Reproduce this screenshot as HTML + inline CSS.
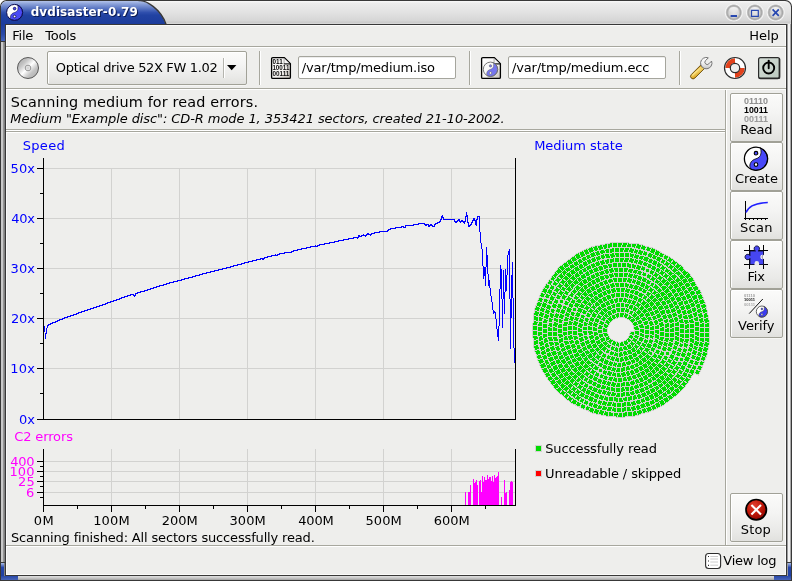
<!DOCTYPE html>
<html lang="en">
<head>
<meta charset="utf-8">
<title>dvdisaster-0.79</title>
<style>
html,body{margin:0;padding:0;background:#fff;}
body{width:792px;height:581px;overflow:hidden;position:relative;font-family:"DejaVu Sans","Liberation Sans",sans-serif;}
#win{position:absolute;left:0;top:0;width:792px;height:581px;overflow:hidden;will-change:transform;}
.t{position:absolute;white-space:pre;line-height:normal;color:#000;font-family:"DejaVu Sans","Liberation Sans",sans-serif;}
.abs{position:absolute;}
svg{position:absolute;left:0;top:0;overflow:visible;}
.hsep{position:absolute;height:1px;background:#a7a79e;box-shadow:0 1px 0 #fff;}
.vsep{position:absolute;width:1px;background:#a7a79e;box-shadow:1px 0 0 #fff;}
.btn{position:absolute;box-sizing:border-box;border:1px solid #a1a197;border-radius:2px;background:linear-gradient(#fbfbfa,#f4f4f3 40%,#e9e9e7 80%,#e1e1de);box-shadow:inset 1px 1px 0 #fff,0 1px 0 rgba(255,255,255,.45);}
.entry{position:absolute;box-sizing:border-box;border:1px solid #a5a59d;border-radius:2px;background:#fff;box-shadow:inset 0 1px 0 rgba(0,0,0,.07);}

</style>
</head>
<body>
<div id="win">
<svg id="frame" width="792" height="581" viewBox="0 0 792 581">
<defs>
<linearGradient id="gTitle" gradientUnits="userSpaceOnUse" x1="0" y1="1" x2="0" y2="24"><stop offset="0" stop-color="#f8f8f8"/><stop offset="0.045" stop-color="#f4f4f4"/><stop offset="0.09" stop-color="#ececec"/><stop offset="0.5" stop-color="#e2e2e2"/><stop offset="0.85" stop-color="#d6d6d6"/><stop offset="0.93" stop-color="#cbcbcb"/><stop offset="1" stop-color="#dcdcdc"/></linearGradient>
<linearGradient id="gTab" x1="0" y1="0" x2="0" y2="1"><stop offset="0" stop-color="#b4c4ea"/><stop offset="0.12" stop-color="#8da3da"/><stop offset="0.5" stop-color="#2f4fad"/><stop offset="0.62" stop-color="#2142a2"/><stop offset="1" stop-color="#1c3c9c"/></linearGradient>
<linearGradient id="gSideL" x1="0" y1="0" x2="1" y2="0"><stop offset="0" stop-color="#d8d8d8"/><stop offset="0.4" stop-color="#c4c4c4"/><stop offset="1" stop-color="#8c8c8c"/></linearGradient>
<linearGradient id="gSideR" x1="0" y1="0" x2="1" y2="0"><stop offset="0" stop-color="#8c8c8c"/><stop offset="0.4" stop-color="#f0f0f0"/><stop offset="1" stop-color="#c8c8c8"/></linearGradient>
<linearGradient id="gBot" x1="0" y1="0" x2="0" y2="1"><stop offset="0" stop-color="#e0e0e0"/><stop offset="0.5" stop-color="#c8c8c8"/><stop offset="1" stop-color="#a0a0a0"/></linearGradient>
<linearGradient id="gBlueV" x1="0" y1="0" x2="0" y2="1"><stop offset="0" stop-color="#1c3c9c"/><stop offset="0.6" stop-color="#2a4aa8"/><stop offset="1" stop-color="#4464bc"/></linearGradient>
<linearGradient id="gBlueC" x1="0" y1="0" x2="0" y2="1"><stop offset="0" stop-color="#a8bce8"/><stop offset="0.35" stop-color="#2444a8"/><stop offset="1" stop-color="#2040a0"/></linearGradient>
<linearGradient id="gBlueB" x1="0" y1="0" x2="0" y2="1"><stop offset="0" stop-color="#2848a8"/><stop offset="1" stop-color="#4864b8"/></linearGradient>
<radialGradient id="gBtn" cx="0.5" cy="0.5" r="0.5"><stop offset="0" stop-color="#e4e4e4"/><stop offset="0.5" stop-color="#d6d6d6"/><stop offset="0.64" stop-color="#b4b4b4"/><stop offset="0.72" stop-color="#a6a6a6"/><stop offset="0.8" stop-color="#c8c8c8"/><stop offset="0.88" stop-color="#f6f6f6"/><stop offset="1" stop-color="#f0f0f0" stop-opacity="0"/></radialGradient><linearGradient id="gBtnHi" x1="0" y1="0" x2="0" y2="1"><stop offset="0" stop-color="#fff" stop-opacity="0.75"/><stop offset="1" stop-color="#fff" stop-opacity="0"/></linearGradient>
<clipPath id="winclip"><path d="M0 581V6.5A6.5 6.5 0 0 1 6.5 0H785.5A6.5 6.5 0 0 1 792 6.5V581Z"/></clipPath>
</defs>
<g clip-path="url(#winclip)">
<rect x="0" y="0" width="792" height="581" fill="#383838"/>
<path d="M1 24V7A6 6 0 0 1 7 1H785A6 6 0 0 1 791 7V24Z" fill="url(#gTitle)"/>
<path d="M1 24h2v552h-2z" fill="#c9c9c9"/><path d="M3 24h1v552h-1z" fill="#949494"/><path d="M4 24h1v552h-1z" fill="#808080"/>
<path d="M787 24h1v552h-1z" fill="#9c9c9c"/><path d="M788 24h2v552h-2z" fill="#f2f2f2"/><path d="M790 24h1v552h-1z" fill="#a8a8a8"/>
<rect x="1" y="576" width="790" height="4" fill="url(#gBot)"/>
<path d="M1 24V7A6 6 0 0 1 7 1H140.5C146 1 160.3 8.8 165.7 24Z" fill="url(#gTab)"/>
<path d="M138.5 0.6H140.5C146.2 0.8 160.7 8.6 166.1 24.4" fill="none" stroke="#383838" stroke-width="1.4"/>
<rect x="1" y="24" width="4" height="17" fill="url(#gBlueV)"/>
<rect x="0" y="41" width="5" height="1" fill="#383838"/>
<rect x="0" y="562" width="5" height="1" fill="#383838"/>
<rect x="1" y="563" width="3" height="13" fill="url(#gBlueC)"/>
<rect x="1" y="576" width="17" height="4" fill="url(#gBlueB)"/>
<rect x="787" y="562" width="5" height="1" fill="#383838"/>
<rect x="788" y="563" width="3" height="13" fill="url(#gBlueC)"/>
<rect x="774" y="576" width="17" height="4" fill="url(#gBlueB)"/>
<rect x="5.5" y="24.5" width="781" height="551" fill="none" stroke="#383838" stroke-width="1"/>
<rect x="6" y="25" width="780" height="550" fill="#fbfbfa"/>
<rect x="7" y="26" width="778" height="548" fill="#eeeeec"/>
<circle cx="733.8" cy="12.5" r="9.6" fill="url(#gBtn)"/>
<ellipse cx="733.8" cy="9.9" rx="4.6" ry="3" fill="url(#gBtnHi)"/>
<rect x="730.5999999999999" y="15" width="6.4" height="2" fill="#2848b0"/>
<circle cx="754.9" cy="12.5" r="9.6" fill="url(#gBtn)"/>
<ellipse cx="754.9" cy="9.9" rx="4.6" ry="3" fill="url(#gBtnHi)"/>
<path d="M751.5 10.3H758.3V16.3H751.5Z" fill="none" stroke="#2848b0" stroke-width="1.2"/>
<circle cx="775.7" cy="12.5" r="9.6" fill="url(#gBtn)"/>
<ellipse cx="775.7" cy="9.9" rx="4.6" ry="3" fill="url(#gBtnHi)"/>
<path d="M772.6 9.4L778.8000000000001 15.8M778.8000000000001 9.4L772.6 15.8" fill="none" stroke="#2848b0" stroke-width="1.7"/>
</g>
</svg>
<div class="hsep" style="left:6px;top:46px;width:780px"></div>
<div class="hsep" style="left:6px;top:88px;width:780px"></div>
<div class="hsep" style="left:6px;top:129px;width:719px"></div>
<div class="hsep" style="left:6px;top:131px;width:719px"></div>
<div class="vsep" style="left:725px;top:90px;height:455px"></div>
<div class="hsep" style="left:6px;top:545px;width:780px"></div>
<div class="btn" id="drive" style="left:47px;top:51px;width:200px;height:34px"></div>
<div class="vsep" style="left:223px;top:58px;height:20px;background:#b4b4ae"></div>
<svg width="792" height="581" viewBox="0 0 792 581"><path d="M227 65H236.4L231.7 70.2Z" fill="#000"/></svg>
<div class="vsep" style="left:259px;top:51px;height:34px"></div>
<div class="entry" style="left:298px;top:56px;width:158px;height:23px"></div>
<div class="vsep" style="left:469px;top:51px;height:34px"></div>
<div class="entry" style="left:508px;top:56px;width:158px;height:23px"></div>
<div class="vsep" style="left:679px;top:51px;height:34px"></div>
<div class="btn" style="left:730px;top:93px;width:53px;height:49px"></div>
<div class="btn" style="left:730px;top:142px;width:53px;height:49px"></div>
<div class="btn" style="left:730px;top:191px;width:53px;height:49px"></div>
<div class="btn" style="left:730px;top:240px;width:53px;height:49px"></div>
<div class="btn" style="left:730px;top:289px;width:53px;height:49px"></div>
<div class="btn" style="left:730px;top:493px;width:53px;height:49px"></div>
<svg id="chart" width="792" height="581" viewBox="0 0 792 581" shape-rendering="crispEdges">
<path d="M44 168h471v1h-471zM44 218h471v1h-471zM44 268h471v1h-471zM44 318h471v1h-471zM44 368h471v1h-471zM111 168h1v251h-1zM179 168h1v251h-1zM247 168h1v251h-1zM315 168h1v251h-1zM383 168h1v251h-1zM451 168h1v251h-1z" fill="#d2d2d0"/>
<path d="M44 461h471v1h-471zM44 471h471v1h-471zM44 481h471v1h-471zM44 492h471v1h-471zM111 449h1v56h-1zM179 449h1v56h-1zM247 449h1v56h-1zM315 449h1v56h-1zM383 449h1v56h-1zM451 449h1v56h-1z" fill="#d2d2d0"/>
<path d="M43 158h1v262h-1zM43 419h473v1h-473zM515 158h1v262h-1zM37 168h6v1h-6zM37 218h6v1h-6zM37 268h6v1h-6zM37 318h6v1h-6zM37 368h6v1h-6zM37 419h6v1h-6zM40 193h3v1h-3zM40 243h3v1h-3zM40 293h3v1h-3zM40 343h3v1h-3zM40 393h3v1h-3zM43 449h1v63h-1zM43 505h473v1h-473zM515 449h1v57h-1zM37 461h6v1h-6zM37 471h6v1h-6zM37 481h6v1h-6zM37 492h6v1h-6zM40 466h3v1h-3zM40 476h3v1h-3zM40 486h3v1h-3zM40 497h3v1h-3zM111 506h1v6h-1zM179 506h1v6h-1zM247 506h1v6h-1zM315 506h1v6h-1zM383 506h1v6h-1zM451 506h1v6h-1zM77 506h1v3h-1zM145 506h1v3h-1zM213 506h1v3h-1zM281 506h1v3h-1zM349 506h1v3h-1zM417 506h1v3h-1zM485 506h1v3h-1z" fill="#000"/>
<path d="M44 326h1v6h-1zM45 333h1v6h-1zM46 328h1v6h-1zM47 325h1v3h-1zM48 324h1v2h-1zM49 324h1v1h-1zM50 323h1v2h-1zM51 323h1v1h-1zM52 322h1v2h-1zM53 322h1v1h-1zM54 322h1v1h-1zM55 321h1v2h-1zM56 321h1v1h-1zM57 320h1v2h-1zM58 320h1v1h-1zM59 319h1v2h-1zM60 319h1v1h-1zM61 319h1v1h-1zM62 318h1v2h-1zM63 318h1v1h-1zM64 317h1v2h-1zM65 317h1v1h-1zM66 317h1v1h-1zM67 316h1v2h-1zM68 316h1v1h-1zM69 316h1v1h-1zM70 315h1v2h-1zM71 315h1v1h-1zM72 315h1v1h-1zM73 314h1v2h-1zM74 314h1v1h-1zM75 314h1v1h-1zM76 313h1v2h-1zM77 313h1v1h-1zM78 312h1v2h-1zM79 312h1v1h-1zM80 312h1v1h-1zM81 311h1v2h-1zM82 311h1v1h-1zM83 311h1v1h-1zM84 310h1v2h-1zM85 310h1v1h-1zM86 310h1v1h-1zM87 309h1v2h-1zM88 309h1v1h-1zM89 309h1v1h-1zM90 308h1v2h-1zM91 308h1v1h-1zM92 308h1v1h-1zM93 307h1v2h-1zM94 307h1v1h-1zM95 307h1v1h-1zM96 306h1v2h-1zM97 306h1v1h-1zM98 306h1v1h-1zM99 305h1v2h-1zM100 305h1v1h-1zM101 305h1v1h-1zM102 304h1v2h-1zM103 304h1v1h-1zM104 304h1v1h-1zM105 303h1v2h-1zM106 303h1v1h-1zM107 302h1v2h-1zM108 302h1v1h-1zM109 302h1v1h-1zM110 301h1v2h-1zM111 301h1v1h-1zM112 301h1v1h-1zM113 300h1v2h-1zM114 300h1v1h-1zM115 300h1v1h-1zM116 299h1v2h-1zM117 299h1v1h-1zM118 299h1v1h-1zM119 298h1v2h-1zM120 298h1v1h-1zM121 297h1v2h-1zM122 297h1v1h-1zM123 297h1v1h-1zM124 296h1v2h-1zM125 296h1v1h-1zM126 296h1v1h-1zM127 295h1v2h-1zM128 295h1v1h-1zM129 295h1v1h-1zM130 294h1v2h-1zM131 294h1v1h-1zM132 294h1v1h-1zM133 294h1v2h-1zM134 295h1v2h-1zM135 293h1v3h-1zM136 293h1v1h-1zM137 292h1v2h-1zM138 292h1v1h-1zM139 292h1v1h-1zM140 291h1v2h-1zM141 291h1v1h-1zM142 291h1v1h-1zM143 291h1v1h-1zM144 290h1v2h-1zM145 290h1v1h-1zM146 290h1v1h-1zM147 289h1v2h-1zM148 289h1v1h-1zM149 289h1v1h-1zM150 288h1v2h-1zM151 288h1v1h-1zM152 288h1v1h-1zM153 287h1v2h-1zM154 287h1v1h-1zM155 287h1v1h-1zM156 286h1v2h-1zM157 286h1v1h-1zM158 286h1v1h-1zM159 285h1v2h-1zM160 285h1v1h-1zM161 285h1v1h-1zM162 285h1v1h-1zM163 284h1v2h-1zM164 284h1v1h-1zM165 284h1v1h-1zM166 283h1v2h-1zM167 283h1v1h-1zM168 283h1v1h-1zM169 282h1v2h-1zM170 282h1v1h-1zM171 282h1v1h-1zM172 282h1v1h-1zM173 281h1v2h-1zM174 281h1v1h-1zM175 281h1v1h-1zM176 281h1v1h-1zM177 280h1v2h-1zM178 280h1v1h-1zM179 280h1v1h-1zM180 280h1v1h-1zM181 279h1v2h-1zM182 279h1v1h-1zM183 279h1v1h-1zM184 278h1v2h-1zM185 278h1v1h-1zM186 278h1v1h-1zM187 278h1v1h-1zM188 277h1v2h-1zM189 277h1v1h-1zM190 277h1v1h-1zM191 277h1v1h-1zM192 276h1v2h-1zM193 276h1v1h-1zM194 276h1v1h-1zM195 275h1v2h-1zM196 275h1v1h-1zM197 275h1v1h-1zM198 275h1v1h-1zM199 274h1v2h-1zM200 274h1v1h-1zM201 274h1v1h-1zM202 273h1v2h-1zM203 273h1v1h-1zM204 273h1v1h-1zM205 273h1v1h-1zM206 272h1v2h-1zM207 272h1v1h-1zM208 272h1v1h-1zM209 272h1v1h-1zM210 271h1v2h-1zM211 271h1v1h-1zM212 271h1v1h-1zM213 271h1v1h-1zM214 270h1v2h-1zM215 270h1v1h-1zM216 270h1v1h-1zM217 270h1v1h-1zM218 269h1v2h-1zM219 269h1v1h-1zM220 269h1v1h-1zM221 269h1v1h-1zM222 268h1v2h-1zM223 268h1v1h-1zM224 268h1v1h-1zM225 268h1v1h-1zM226 267h1v2h-1zM227 267h1v1h-1zM228 267h1v1h-1zM229 267h1v1h-1zM230 266h1v2h-1zM231 266h1v1h-1zM232 266h1v1h-1zM233 265h1v2h-1zM234 265h1v1h-1zM235 265h1v1h-1zM236 265h1v1h-1zM237 264h1v2h-1zM238 264h1v1h-1zM239 264h1v1h-1zM240 264h1v1h-1zM241 263h1v2h-1zM242 263h1v1h-1zM243 263h1v1h-1zM244 262h1v2h-1zM245 262h1v1h-1zM246 262h1v1h-1zM247 262h1v1h-1zM248 261h1v2h-1zM249 261h1v1h-1zM250 261h1v1h-1zM251 261h1v1h-1zM252 260h1v2h-1zM253 260h1v1h-1zM254 260h1v1h-1zM255 260h1v1h-1zM256 259h1v2h-1zM257 259h1v1h-1zM258 259h1v1h-1zM259 259h1v1h-1zM260 258h1v2h-1zM261 258h1v1h-1zM262 258h1v2h-1zM263 258h1v2h-1zM264 257h1v2h-1zM265 257h1v1h-1zM266 257h1v1h-1zM267 256h1v2h-1zM268 256h1v1h-1zM269 256h1v1h-1zM270 256h1v1h-1zM271 255h1v2h-1zM272 255h1v1h-1zM273 255h1v1h-1zM274 255h1v1h-1zM275 254h1v2h-1zM276 255h1v1h-1zM277 254h1v2h-1zM278 254h1v1h-1zM279 253h1v2h-1zM280 253h1v1h-1zM281 253h1v1h-1zM282 253h1v1h-1zM283 253h1v1h-1zM284 252h1v2h-1zM285 252h1v1h-1zM286 252h1v1h-1zM287 252h1v1h-1zM288 252h1v1h-1zM289 252h1v1h-1zM290 252h1v1h-1zM291 251h1v2h-1zM292 251h1v1h-1zM293 250h1v2h-1zM294 250h1v1h-1zM295 250h1v1h-1zM296 250h1v1h-1zM297 249h1v2h-1zM298 249h1v1h-1zM299 249h1v1h-1zM300 249h1v1h-1zM301 248h1v2h-1zM302 248h1v1h-1zM303 248h1v1h-1zM304 248h1v1h-1zM305 248h1v1h-1zM306 247h1v2h-1zM307 247h1v1h-1zM308 247h1v1h-1zM309 247h1v1h-1zM310 246h1v2h-1zM311 246h1v1h-1zM312 246h1v1h-1zM313 246h1v1h-1zM314 246h1v1h-1zM315 245h1v2h-1zM316 246h1v1h-1zM317 245h1v2h-1zM318 245h1v1h-1zM319 244h1v2h-1zM320 244h1v1h-1zM321 244h1v1h-1zM322 244h1v1h-1zM323 244h1v1h-1zM324 243h1v2h-1zM325 243h1v1h-1zM326 243h1v1h-1zM327 243h1v1h-1zM328 243h1v1h-1zM329 242h1v2h-1zM330 242h1v1h-1zM331 242h1v1h-1zM332 242h1v1h-1zM333 242h1v1h-1zM334 241h1v2h-1zM335 241h1v1h-1zM336 241h1v1h-1zM337 241h1v1h-1zM338 240h1v2h-1zM339 240h1v1h-1zM340 240h1v1h-1zM341 240h1v1h-1zM342 240h1v1h-1zM343 239h1v2h-1zM344 239h1v1h-1zM345 239h1v1h-1zM346 239h1v1h-1zM347 239h1v1h-1zM348 238h1v2h-1zM349 238h1v1h-1zM350 238h1v1h-1zM351 238h1v1h-1zM352 238h1v1h-1zM353 237h1v2h-1zM354 237h1v1h-1zM355 237h1v1h-1zM356 237h1v1h-1zM357 237h1v2h-1zM358 235h1v3h-1zM359 235h1v2h-1zM360 236h1v1h-1zM361 235h1v2h-1zM362 235h1v1h-1zM363 234h1v2h-1zM364 235h1v1h-1zM365 235h1v2h-1zM366 234h1v2h-1zM367 233h1v2h-1zM368 233h1v2h-1zM369 234h1v1h-1zM370 234h1v2h-1zM371 233h1v2h-1zM372 233h1v1h-1zM373 233h1v1h-1zM374 232h1v2h-1zM375 232h1v1h-1zM376 232h1v1h-1zM377 232h1v1h-1zM378 232h1v1h-1zM379 231h1v2h-1zM380 231h1v1h-1zM381 231h1v1h-1zM382 231h1v1h-1zM383 231h1v1h-1zM384 231h1v1h-1zM385 231h1v1h-1zM386 231h1v1h-1zM387 230h1v2h-1zM388 229h1v2h-1zM389 229h1v1h-1zM390 228h1v2h-1zM391 228h1v1h-1zM392 228h1v1h-1zM393 228h1v1h-1zM394 228h1v1h-1zM395 227h1v2h-1zM396 227h1v1h-1zM397 227h1v1h-1zM398 227h1v1h-1zM399 227h1v1h-1zM400 227h1v1h-1zM401 226h1v2h-1zM402 226h1v1h-1zM403 226h1v2h-1zM404 227h1v1h-1zM405 225h1v3h-1zM406 225h1v1h-1zM407 225h1v1h-1zM408 225h1v1h-1zM409 225h1v1h-1zM410 225h1v1h-1zM411 225h1v1h-1zM412 225h1v1h-1zM413 224h1v2h-1zM414 224h1v1h-1zM415 224h1v1h-1zM416 224h1v1h-1zM417 224h1v1h-1zM418 223h1v2h-1zM419 223h1v1h-1zM420 223h1v1h-1zM421 223h1v1h-1zM422 223h1v1h-1zM423 223h1v1h-1zM424 223h1v2h-1zM425 224h1v2h-1zM426 224h1v2h-1zM427 224h1v1h-1zM428 224h1v3h-1zM429 225h1v2h-1zM430 224h1v2h-1zM431 224h1v2h-1zM432 225h1v2h-1zM433 226h1v1h-1zM434 224h1v3h-1zM435 223h1v2h-1zM436 223h1v1h-1zM437 222h1v2h-1zM438 222h1v1h-1zM439 221h1v2h-1zM440 219h1v3h-1zM441 216h1v4h-1zM442 215h1v3h-1zM443 217h1v3h-1zM444 219h1v1h-1zM445 219h1v1h-1zM446 219h1v1h-1zM447 219h1v1h-1zM448 219h1v1h-1zM449 219h1v1h-1zM450 219h1v1h-1zM451 219h1v1h-1zM452 219h1v1h-1zM453 219h1v1h-1zM454 219h1v3h-1zM455 221h1v2h-1zM456 221h1v2h-1zM457 220h1v2h-1zM458 219h1v2h-1zM459 219h1v3h-1zM460 221h1v2h-1zM461 220h1v2h-1zM462 220h1v2h-1zM463 221h1v2h-1zM464 221h1v3h-1zM465 216h1v6h-1zM466 212h1v5h-1zM467 215h1v8h-1zM468 222h1v5h-1zM469 225h1v2h-1zM470 224h1v2h-1zM471 222h1v3h-1zM472 220h1v3h-1zM473 218h1v3h-1zM474 218h1v3h-1zM475 220h1v5h-1zM476 219h1v7h-1zM477 216h1v4h-1zM478 216h1v1h-1zM479 216h1v16h-1zM480 232h1v11h-1zM481 243h1v6h-1zM482 249h1v17h-1zM483 266h1v13h-1zM484 267h1v9h-1zM485 267h1v19h-1zM486 247h1v20h-1zM487 255h1v19h-1zM488 274h1v12h-1zM489 280h1v8h-1zM490 288h1v8h-1zM491 296h1v6h-1zM492 302h1v8h-1zM493 310h1v4h-1zM494 311h1v2h-1zM495 312h1v7h-1zM496 319h1v10h-1zM497 329h1v8h-1zM498 326h1v15h-1zM499 289h1v37h-1zM500 265h1v24h-1zM501 269h1v30h-1zM502 299h1v29h-1zM503 270h1v29h-1zM504 292h1v22h-1zM505 269h1v23h-1zM506 275h1v16h-1zM507 255h1v20h-1zM508 251h1v4h-1zM509 249h1v50h-1zM510 299h1v50h-1zM511 275h1v43h-1zM512 262h1v36h-1zM513 298h1v50h-1zM514 348h1v15h-1z" fill="#0000ff"/>
<path d="M465 492h1v13h-1zM468 492h1v13h-1zM469 492h1v13h-1zM470 485h1v20h-1zM473 479h1v26h-1zM474 483h1v22h-1zM475 482h1v23h-1zM476 480h1v25h-1zM477 485h1v20h-1zM479 481h1v24h-1zM480 480h1v25h-1zM481 492h1v13h-1zM482 476h1v29h-1zM483 482h1v23h-1zM484 477h1v28h-1zM485 480h1v25h-1zM486 480h1v25h-1zM487 475h1v30h-1zM488 479h1v26h-1zM489 477h1v28h-1zM490 477h1v28h-1zM491 481h1v24h-1zM492 476h1v29h-1zM493 482h1v23h-1zM494 475h1v30h-1zM495 478h1v27h-1zM496 477h1v28h-1zM497 476h1v29h-1zM498 472h1v33h-1zM501 497h1v8h-1zM504 480h1v25h-1zM505 493h1v12h-1zM506 492h1v13h-1zM509 490h1v15h-1zM510 482h1v23h-1zM511 481h1v24h-1zM512 482h1v23h-1z" fill="#ff00ff"/>
<path id="spiral-bg" d="M610 242h19v1h-19zM605 243h34v1h-34zM600 244h43v1h-43zM595 245h50v1h-50zM591 246h58v1h-58zM589 247h64v1h-64zM586 248h69v1h-69zM584 249h73v1h-73zM582 250h77v1h-77zM580 251h81v1h-81zM578 252h84v1h-84zM576 253h88v1h-88zM575 254h91v1h-91zM574 255h94v1h-94zM572 256h98v1h-98zM571 257h100v1h-100zM570 258h103v1h-103zM568 259h106v1h-106zM567 260h108v1h-108zM566 261h111v1h-111zM564 262h114v1h-114zM563 263h116v1h-116zM562 264h119v1h-119zM560 265h122v1h-122zM559 266h124v1h-124zM558 267h126v1h-126zM557 268h127v1h-127zM557 269h128v1h-128zM556 270h130v1h-130zM555 271h133v1h-133zM554 272h135v1h-135zM554 273h136v1h-136zM553 274h138v1h-138zM552 275h139v1h-139zM551 276h141v1h-141zM551 277h142v1h-142zM550 278h144v1h-144zM549 279h145v1h-145zM548 280h147v1h-147zM548 281h147v1h-147zM547 282h149v1h-149zM546 283h150v1h-150zM545 284h152v1h-152zM545 285h152v1h-152zM544 286h154v1h-154zM543 287h156v1h-156zM543 288h156v1h-156zM542 289h158v1h-158zM542 290h159v1h-159zM541 291h160v1h-160zM541 292h161v1h-161zM540 293h29v1h-29zM570 293h132v1h-132zM540 294h162v1h-162zM539 295h164v1h-164zM539 296h164v1h-164zM539 297h165v1h-165zM538 298h166v1h-166zM538 299h166v1h-166zM537 300h168v1h-168zM537 301h168v1h-168zM537 302h169v1h-169zM536 303h170v1h-170zM536 304h170v1h-170zM535 305h172v1h-172zM535 306h172v1h-172zM535 307h172v1h-172zM534 308h173v1h-173zM534 309h173v1h-173zM534 310h174v1h-174zM534 311h174v1h-174zM534 312h174v1h-174zM533 313h175v1h-175zM533 314h175v1h-175zM533 315h176v1h-176zM533 316h176v1h-176zM533 317h176v1h-176zM533 318h85v1h-85zM625 318h84v1h-84zM533 319h82v1h-82zM627 319h82v1h-82zM533 320h80v1h-80zM629 320h81v1h-81zM533 321h79v1h-79zM630 321h80v1h-80zM533 322h78v1h-78zM631 322h79v1h-79zM532 323h78v1h-78zM632 323h78v1h-78zM532 324h78v1h-78zM632 324h78v1h-78zM532 325h77v1h-77zM633 325h77v1h-77zM532 326h77v1h-77zM633 326h77v1h-77zM532 327h76v1h-76zM633 327h77v1h-77zM532 328h76v1h-76zM633 328h77v1h-77zM532 329h76v1h-76zM634 329h76v1h-76zM532 330h76v1h-76zM634 330h76v1h-76zM532 331h76v1h-76zM630 331h80v1h-80zM532 332h76v1h-76zM630 332h80v1h-80zM532 333h76v1h-76zM629 333h81v1h-81zM532 334h77v1h-77zM629 334h81v1h-81zM532 335h77v1h-77zM629 335h81v1h-81zM532 336h78v1h-78zM628 336h82v1h-82zM532 337h78v1h-78zM628 337h82v1h-82zM533 338h78v1h-78zM627 338h83v1h-83zM533 339h80v1h-80zM626 339h84v1h-84zM533 340h82v1h-82zM624 340h86v1h-86zM533 341h85v1h-85zM621 341h89v1h-89zM533 342h177v1h-177zM533 343h177v1h-177zM533 344h177v1h-177zM533 345h176v1h-176zM533 346h176v1h-176zM533 347h176v1h-176zM534 348h175v1h-175zM534 349h175v1h-175zM534 350h174v1h-174zM534 351h174v1h-174zM535 352h173v1h-173zM535 353h173v1h-173zM536 354h172v1h-172zM536 355h171v1h-171zM536 356h171v1h-171zM536 357h171v1h-171zM537 358h169v1h-169zM537 359h169v1h-169zM537 360h168v1h-168zM538 361h167v1h-167zM538 362h167v1h-167zM539 363h165v1h-165zM539 364h165v1h-165zM539 365h164v1h-164zM540 366h163v1h-163zM540 367h163v1h-163zM541 368h161v1h-161zM541 369h161v1h-161zM542 370h159v1h-159zM542 371h159v1h-159zM543 372h157v1h-157zM544 373h156v1h-156zM544 374h150v1h-150zM696 374h3v1h-3zM545 375h148v1h-148zM698 375h1v1h-1zM545 376h147v1h-147zM546 377h146v1h-146zM547 378h144v1h-144zM547 379h144v1h-144zM548 380h142v1h-142zM549 381h140v1h-140zM550 382h139v1h-139zM550 383h138v1h-138zM551 384h136v1h-136zM552 385h134v1h-134zM553 386h133v1h-133zM553 387h132v1h-132zM554 388h130v1h-130zM555 389h128v1h-128zM556 390h126v1h-126zM557 391h124v1h-124zM558 392h122v1h-122zM559 393h120v1h-120zM560 394h118v1h-118zM562 395h115v1h-115zM563 396h113v1h-113zM564 397h110v1h-110zM565 398h108v1h-108zM566 399h106v1h-106zM567 400h103v1h-103zM569 401h100v1h-100zM570 402h98v1h-98zM571 403h95v1h-95zM573 404h92v1h-92zM575 405h89v1h-89zM577 406h85v1h-85zM579 407h81v1h-81zM581 408h77v1h-77zM583 409h73v1h-73zM586 410h68v1h-68zM588 411h63v1h-63zM590 412h59v1h-59zM592 413h53v1h-53zM596 414h45v1h-45zM601 415h38v1h-38zM606 416h29v1h-29zM616 417h9v1h-9z" fill="#d2d2d0"/>
<path id="spiral" d="M610 243h2v1h-2zM613 243h4v4h-4zM618 243h4v2h-4zM623 243h4v2h-4zM628 243h1v1h-1zM605 244h2v1h-2zM608 244h4v3h-4zM628 244h3v1h-3zM632 244h4v2h-4zM637 244h2v1h-2zM600 245h2v1h-2zM603 245h4v2h-4zM618 245h3v2h-3zM622 245h4v2h-4zM627 245h4v2h-4zM637 245h4v1h-4zM642 245h1v1h-1zM595 246h2v1h-2zM598 246h4v1h-4zM632 246h3v1h-3zM636 246h5v1h-5zM642 246h3v1h-3zM591 247h1v1h-1zM593 247h4v1h-4zM598 247h5v1h-5zM604 247h3v1h-3zM608 247h2v1h-2zM634 247h1v1h-1zM636 247h4v1h-4zM641 247h5v1h-5zM647 247h2v1h-2zM589 248h4v1h-4zM594 248h4v2h-4zM599 248h4v1h-4zM604 248h2v1h-2zM612 248h2v1h-2zM615 248h4v4h-4zM620 248h4v2h-4zM625 248h4v2h-4zM630 248h2v1h-2zM638 248h2v1h-2zM641 248h4v1h-4zM647 248h4v1h-4zM652 248h1v1h-1zM586 249h1v1h-1zM588 249h5v1h-5zM599 249h2v1h-2zM606 249h3v1h-3zM610 249h4v3h-4zM630 249h4v1h-4zM635 249h1v1h-1zM643 249h2v1h-2zM646 249h4v1h-4zM651 249h4v2h-4zM584 250h4v2h-4zM589 250h5v1h-5zM595 250h2v1h-2zM601 250h3v1h-3zM605 250h4v1h-4zM620 250h3v2h-3zM624 250h4v2h-4zM629 250h5v1h-5zM635 250h3v1h-3zM639 250h2v1h-2zM647 250h3v1h-3zM656 250h1v1h-1zM582 251h1v1h-1zM589 251h4v1h-4zM597 251h2v1h-2zM600 251h5v2h-5zM606 251h3v2h-3zM629 251h4v1h-4zM634 251h4v1h-4zM639 251h4v1h-4zM644 251h1v1h-1zM650 251h5v1h-5zM656 251h3v1h-3zM580 252h4v2h-4zM585 252h4v2h-4zM590 252h1v1h-1zM593 252h1v1h-1zM595 252h4v1h-4zM610 252h2v1h-2zM631 252h2v1h-2zM634 252h3v1h-3zM638 252h5v1h-5zM644 252h3v1h-3zM651 252h3v1h-3zM655 252h5v1h-5zM578 253h1v1h-1zM591 253h4v1h-4zM596 253h4v2h-4zM601 253h2v1h-2zM612 253h2v1h-2zM615 253h4v2h-4zM620 253h4v4h-4zM625 253h4v4h-4zM630 253h1v1h-1zM636 253h1v1h-1zM638 253h4v1h-4zM643 253h4v2h-4zM649 253h2v1h-2zM653 253h1v1h-1zM655 253h4v2h-4zM660 253h2v1h-2zM576 254h3v1h-3zM580 254h5v1h-5zM586 254h1v1h-1zM590 254h5v1h-5zM603 254h1v1h-1zM605 254h4v2h-4zM610 254h4v1h-4zM630 254h4v2h-4zM635 254h1v1h-1zM640 254h2v1h-2zM648 254h5v1h-5zM660 254h4v1h-4zM575 255h5v1h-5zM581 255h4v1h-4zM587 255h3v1h-3zM591 255h5v1h-5zM597 255h1v1h-1zM601 255h3v1h-3zM610 255h5v1h-5zM616 255h3v2h-3zM635 255h4v1h-4zM645 255h1v1h-1zM648 255h4v2h-4zM653 255h2v1h-2zM657 255h1v1h-1zM659 255h4v1h-4zM665 255h1v1h-1zM574 256h1v1h-1zM576 256h4v1h-4zM581 256h2v1h-2zM586 256h4v1h-4zM591 256h3v1h-3zM598 256h2v1h-2zM601 256h4v2h-4zM606 256h4v2h-4zM611 256h4v1h-4zM630 256h3v1h-3zM634 256h5v1h-5zM640 256h4v1h-4zM653 256h4v1h-4zM660 256h3v1h-3zM664 256h4v2h-4zM572 257h3v1h-3zM576 257h5v1h-5zM583 257h3v1h-3zM587 257h4v1h-4zM594 257h1v1h-1zM596 257h4v1h-4zM611 257h2v1h-2zM632 257h1v1h-1zM634 257h4v1h-4zM639 257h4v2h-4zM644 257h4v1h-4zM650 257h1v1h-1zM652 257h4v1h-4zM657 257h3v1h-3zM669 257h1v1h-1zM571 258h5v1h-5zM577 258h2v1h-2zM582 258h4v1h-4zM587 258h2v1h-2zM592 258h3v1h-3zM596 258h5v1h-5zM602 258h2v1h-2zM613 258h1v1h-1zM615 258h4v4h-4zM620 258h4v2h-4zM625 258h4v2h-4zM630 258h2v1h-2zM636 258h2v1h-2zM644 258h5v1h-5zM653 258h3v1h-3zM657 258h5v1h-5zM664 258h3v1h-3zM669 258h2v1h-2zM570 259h1v1h-1zM572 259h5v1h-5zM579 259h2v1h-2zM582 259h5v1h-5zM589 259h1v1h-1zM591 259h5v1h-5zM597 259h3v1h-3zM607 259h2v1h-2zM610 259h4v3h-4zM630 259h4v1h-4zM635 259h1v1h-1zM641 259h1v1h-1zM643 259h5v1h-5zM649 259h3v1h-3zM656 259h5v1h-5zM662 259h1v1h-1zM666 259h1v1h-1zM668 259h5v1h-5zM568 260h3v1h-3zM572 260h4v1h-4zM578 260h4v1h-4zM583 260h2v1h-2zM587 260h4v2h-4zM592 260h4v1h-4zM597 260h1v1h-1zM602 260h2v1h-2zM605 260h4v2h-4zM620 260h3v2h-3zM624 260h4v2h-4zM629 260h5v1h-5zM635 260h3v1h-3zM639 260h2v1h-2zM644 260h4v1h-4zM649 260h4v1h-4zM654 260h1v1h-1zM657 260h3v1h-3zM662 260h3v1h-3zM667 260h5v1h-5zM673 260h1v1h-1zM567 261h5v1h-5zM573 261h1v1h-1zM576 261h1v1h-1zM578 261h5v1h-5zM585 261h1v1h-1zM592 261h3v1h-3zM598 261h1v1h-1zM600 261h4v1h-4zM629 261h4v1h-4zM634 261h4v1h-4zM639 261h4v1h-4zM646 261h1v1h-1zM648 261h4v1h-4zM653 261h4v2h-4zM659 261h1v1h-1zM661 261h4v1h-4zM666 261h1v1h-1zM669 261h2v1h-2zM673 261h2v1h-2zM566 262h1v1h-1zM568 262h5v1h-5zM574 262h4v2h-4zM579 262h3v1h-3zM583 262h4v2h-4zM588 262h4v1h-4zM596 262h3v1h-3zM600 262h5v1h-5zM606 262h3v1h-3zM610 262h2v1h-2zM631 262h2v1h-2zM634 262h3v1h-3zM638 262h5v1h-5zM644 262h2v1h-2zM649 262h3v1h-3zM658 262h1v1h-1zM661 262h3v1h-3zM666 262h2v1h-2zM670 262h1v1h-1zM672 262h5v1h-5zM564 263h3v1h-3zM568 263h4v1h-4zM579 263h1v1h-1zM588 263h2v1h-2zM593 263h1v1h-1zM595 263h5v1h-5zM601 263h4v1h-4zM606 263h2v1h-2zM613 263h4v4h-4zM618 263h3v4h-3zM622 263h4v4h-4zM627 263h2v1h-2zM636 263h1v1h-1zM638 263h4v1h-4zM643 263h5v1h-5zM652 263h5v1h-5zM658 263h2v1h-2zM663 263h1v1h-1zM665 263h5v1h-5zM671 263h5v1h-5zM677 263h1v1h-1zM563 264h5v1h-5zM569 264h1v1h-1zM572 264h1v1h-1zM574 264h5v1h-5zM580 264h2v1h-2zM583 264h5v1h-5zM591 264h4v2h-4zM596 264h4v1h-4zM601 264h2v1h-2zM608 264h4v2h-4zM627 264h4v3h-4zM632 264h2v1h-2zM640 264h2v1h-2zM643 264h4v1h-4zM648 264h3v1h-3zM653 264h3v1h-3zM657 264h5v1h-5zM664 264h5v1h-5zM670 264h1v1h-1zM673 264h2v1h-2zM677 264h2v1h-2zM562 265h1v1h-1zM564 265h5v1h-5zM570 265h4v1h-4zM575 265h2v1h-2zM579 265h4v2h-4zM584 265h3v1h-3zM589 265h1v1h-1zM596 265h3v1h-3zM603 265h4v1h-4zM632 265h4v2h-4zM637 265h2v1h-2zM644 265h3v1h-3zM648 265h4v1h-4zM655 265h1v1h-1zM657 265h4v1h-4zM662 265h1v1h-1zM666 265h2v1h-2zM670 265h2v1h-2zM674 265h1v1h-1zM676 265h5v1h-5zM560 266h3v1h-3zM564 266h4v1h-4zM570 266h5v1h-5zM577 266h1v1h-1zM584 266h1v1h-1zM587 266h4v1h-4zM592 266h4v1h-4zM599 266h3v1h-3zM603 266h5v1h-5zM609 266h3v1h-3zM637 266h4v1h-4zM642 266h1v1h-1zM647 266h4v1h-4zM652 266h3v1h-3zM657 266h3v1h-3zM662 266h2v1h-2zM667 266h1v1h-1zM669 266h5v1h-5zM675 266h5v1h-5zM681 266h1v1h-1zM559 267h5v1h-5zM565 267h1v1h-1zM568 267h1v1h-1zM570 267h4v1h-4zM575 267h3v1h-3zM579 267h5v1h-5zM586 267h5v1h-5zM592 267h2v1h-2zM596 267h1v1h-1zM598 267h5v1h-5zM604 267h4v1h-4zM609 267h2v1h-2zM629 267h2v1h-2zM632 267h3v1h-3zM636 267h5v1h-5zM642 267h3v1h-3zM648 267h3v1h-3zM652 267h4v1h-4zM659 267h1v1h-1zM661 267h5v1h-5zM668 267h5v1h-5zM674 267h1v1h-1zM676 267h3v1h-3zM680 267h3v1h-3zM558 268h1v1h-1zM560 268h5v1h-5zM566 268h4v1h-4zM571 268h1v1h-1zM574 268h5v1h-5zM580 268h2v1h-2zM584 268h2v1h-2zM587 268h4v1h-4zM594 268h4v1h-4zM599 268h4v2h-4zM604 268h2v1h-2zM611 268h2v1h-2zM614 268h4v2h-4zM619 268h4v4h-4zM624 268h4v2h-4zM634 268h1v1h-1zM636 268h4v1h-4zM641 268h4v2h-4zM651 268h5v1h-5zM657 268h2v1h-2zM660 268h5v1h-5zM666 268h1v1h-1zM670 268h2v1h-2zM674 268h2v1h-2zM677 268h1v1h-1zM679 268h4v1h-4zM558 269h2v1h-2zM561 269h3v1h-3zM565 269h6v1h-6zM573 269h1v1h-1zM575 269h5v1h-5zM582 269h4v1h-4zM587 269h2v1h-2zM591 269h1v1h-1zM593 269h5v1h-5zM606 269h2v1h-2zM609 269h4v1h-4zM629 269h4v1h-4zM638 269h2v1h-2zM646 269h3v3h-3zM652 269h3v1h-3zM656 269h4v2h-4zM662 269h2v1h-2zM666 269h2v1h-2zM671 269h1v1h-1zM673 269h4v1h-4zM678 269h6v1h-6zM557 270h4v1h-4zM562 270h1v1h-1zM564 270h1v1h-1zM566 270h4v1h-4zM571 270h3v1h-3zM575 270h4v1h-4zM580 270h2v1h-2zM583 270h4v1h-4zM589 270h4v2h-4zM594 270h5v1h-5zM600 270h1v1h-1zM604 270h4v1h-4zM609 270h5v1h-5zM615 270h3v2h-3zM624 270h3v2h-3zM628 270h5v1h-5zM634 270h4v1h-4zM643 270h1v1h-1zM651 270h1v1h-1zM654 270h1v1h-1zM661 270h1v1h-1zM663 270h1v1h-1zM665 270h5v1h-5zM672 270h6v1h-6zM680 270h3v1h-3zM684 270h1v1h-1zM556 271h6v1h-6zM563 271h3v1h-3zM567 271h1v1h-1zM570 271h5v1h-5zM576 271h1v1h-1zM579 271h3v1h-3zM583 271h3v1h-3zM587 271h1v1h-1zM594 271h3v1h-3zM601 271h3v1h-3zM605 271h4v2h-4zM610 271h4v1h-4zM628 271h4v1h-4zM633 271h4v2h-4zM638 271h3v1h-3zM650 271h4v2h-4zM656 271h3v1h-3zM661 271h2v1h-2zM665 271h4v1h-4zM670 271h1v1h-1zM673 271h3v1h-3zM678 271h1v1h-1zM681 271h1v1h-1zM683 271h3v1h-3zM555 272h1v1h-1zM557 272h4v1h-4zM562 272h5v1h-5zM569 272h1v1h-1zM571 272h5v1h-5zM577 272h1v1h-1zM579 272h4v2h-4zM586 272h3v1h-3zM590 272h4v1h-4zM597 272h1v1h-1zM599 272h5v1h-5zM610 272h2v1h-2zM630 272h2v1h-2zM638 272h4v1h-4zM643 272h1v1h-1zM655 272h1v1h-1zM658 272h1v1h-1zM660 272h5v1h-5zM667 272h1v1h-1zM669 272h3v1h-3zM674 272h1v1h-1zM676 272h4v1h-4zM682 272h6v1h-6zM555 273h2v1h-2zM558 273h1v1h-1zM561 273h1v1h-1zM563 273h3v1h-3zM567 273h3v1h-3zM571 273h4v1h-4zM576 273h2v1h-2zM585 273h4v1h-4zM590 273h2v1h-2zM595 273h4v2h-4zM600 273h5v1h-5zM606 273h2v1h-2zM612 273h1v1h-1zM614 273h4v2h-4zM619 273h4v4h-4zM624 273h4v2h-4zM629 273h1v1h-1zM635 273h1v1h-1zM637 273h4v1h-4zM643 273h3v1h-3zM650 273h3v1h-3zM655 273h2v1h-2zM659 273h5v1h-5zM665 273h1v1h-1zM668 273h6v1h-6zM675 273h6v1h-6zM683 273h4v1h-4zM688 273h1v1h-1zM554 274h4v1h-4zM560 274h2v1h-2zM563 274h2v1h-2zM566 274h5v1h-5zM572 274h1v1h-1zM575 274h4v1h-4zM580 274h1v1h-1zM583 274h2v1h-2zM586 274h4v1h-4zM593 274h1v1h-1zM600 274h3v1h-3zM609 274h4v1h-4zM629 274h4v1h-4zM634 274h1v1h-1zM639 274h2v1h-2zM642 274h4v1h-4zM648 274h1v1h-1zM652 274h1v1h-1zM654 274h5v1h-5zM661 274h2v1h-2zM665 274h2v1h-2zM669 274h3v1h-3zM674 274h1v1h-1zM677 274h3v1h-3zM681 274h1v1h-1zM683 274h3v1h-3zM687 274h3v1h-3zM553 275h4v1h-4zM559 275h4v1h-4zM564 275h1v1h-1zM567 275h5v1h-5zM573 275h1v1h-1zM575 275h5v1h-5zM581 275h4v1h-4zM586 275h3v1h-3zM591 275h4v2h-4zM596 275h4v1h-4zM604 275h4v1h-4zM609 275h5v1h-5zM615 275h3v2h-3zM624 275h3v2h-3zM628 275h5v1h-5zM634 275h4v1h-4zM643 275h3v1h-3zM647 275h4v2h-4zM653 275h5v1h-5zM659 275h1v1h-1zM662 275h1v1h-1zM664 275h5v1h-5zM670 275h1v1h-1zM672 275h4v1h-4zM678 275h1v1h-1zM680 275h3v1h-3zM684 275h1v1h-1zM686 275h4v1h-4zM552 276h1v1h-1zM554 276h2v1h-2zM558 276h6v1h-6zM565 276h2v1h-2zM568 276h3v1h-3zM572 276h2v1h-2zM575 276h4v1h-4zM581 276h5v2h-5zM589 276h1v1h-1zM596 276h2v1h-2zM600 276h4v2h-4zM605 276h4v2h-4zM610 276h4v1h-4zM628 276h4v1h-4zM633 276h4v2h-4zM638 276h3v1h-3zM652 276h1v1h-1zM655 276h2v1h-2zM659 276h2v1h-2zM663 276h5v1h-5zM669 276h1v1h-1zM671 276h6v1h-6zM679 276h5v1h-5zM685 276h6v1h-6zM552 277h2v1h-2zM555 277h1v1h-1zM557 277h1v1h-1zM560 277h3v1h-3zM564 277h4v1h-4zM569 277h1v1h-1zM571 277h4v1h-4zM576 277h1v1h-1zM579 277h1v1h-1zM587 277h3v1h-3zM591 277h5v1h-5zM598 277h1v1h-1zM610 277h2v1h-2zM630 277h2v1h-2zM638 277h4v1h-4zM643 277h1v1h-1zM647 277h3v1h-3zM652 277h2v1h-2zM656 277h1v1h-1zM658 277h5v1h-5zM665 277h2v1h-2zM669 277h2v1h-2zM672 277h4v1h-4zM677 277h1v1h-1zM680 277h5v1h-5zM686 277h3v1h-3zM691 277h1v1h-1zM551 278h4v1h-4zM557 278h2v1h-2zM561 278h1v1h-1zM563 278h6v1h-6zM570 278h6v1h-6zM577 278h4v1h-4zM582 278h2v1h-2zM587 278h4v1h-4zM592 278h2v1h-2zM596 278h3v1h-3zM600 278h5v1h-5zM606 278h2v1h-2zM613 278h4v2h-4zM618 278h4v4h-4zM623 278h4v2h-4zM628 278h2v1h-2zM635 278h1v1h-1zM637 278h5v1h-5zM643 278h3v1h-3zM649 278h1v1h-1zM651 278h5v1h-5zM657 278h5v1h-5zM663 278h1v1h-1zM666 278h1v1h-1zM668 278h4v1h-4zM673 278h2v1h-2zM677 278h2v1h-2zM680 278h3v1h-3zM685 278h1v1h-1zM687 278h1v1h-1zM689 278h4v1h-4zM551 279h3v1h-3zM556 279h5v1h-5zM562 279h1v1h-1zM565 279h3v1h-3zM569 279h1v1h-1zM572 279h3v1h-3zM576 279h1v1h-1zM578 279h4v1h-4zM584 279h2v1h-2zM587 279h5v1h-5zM595 279h5v1h-5zM601 279h3v1h-3zM609 279h3v1h-3zM628 279h4v1h-4zM633 279h1v1h-1zM638 279h3v1h-3zM642 279h5v1h-5zM650 279h5v1h-5zM656 279h1v1h-1zM659 279h2v1h-2zM663 279h2v1h-2zM667 279h6v1h-6zM674 279h1v1h-1zM676 279h4v1h-4zM681 279h1v1h-1zM683 279h4v1h-4zM688 279h5v1h-5zM549 280h1v1h-1zM553 280h1v1h-1zM555 280h5v1h-5zM562 280h2v1h-2zM566 280h1v1h-1zM568 280h3v1h-3zM573 280h1v1h-1zM575 280h2v1h-2zM578 280h3v1h-3zM582 280h5v1h-5zM588 280h3v1h-3zM592 280h3v1h-3zM596 280h4v2h-4zM601 280h1v1h-1zM605 280h2v1h-2zM608 280h5v2h-5zM614 280h3v2h-3zM623 280h3v2h-3zM627 280h5v1h-5zM633 280h3v1h-3zM637 280h1v1h-1zM640 280h1v1h-1zM642 280h4v1h-4zM647 280h2v1h-2zM652 280h2v1h-2zM656 280h2v1h-2zM660 280h1v1h-1zM662 280h5v1h-5zM668 280h3v1h-3zM673 280h1v1h-1zM675 280h6v1h-6zM682 280h5v1h-5zM688 280h6v1h-6zM549 281h3v1h-3zM554 281h1v1h-1zM557 281h2v1h-2zM561 281h5v1h-5zM567 281h6v1h-6zM574 281h4v1h-4zM579 281h1v1h-1zM581 281h1v1h-1zM583 281h4v1h-4zM588 281h1v1h-1zM591 281h4v1h-4zM603 281h4v1h-4zM627 281h4v1h-4zM632 281h4v1h-4zM637 281h3v1h-3zM643 281h3v1h-3zM647 281h4v1h-4zM653 281h1v1h-1zM655 281h5v1h-5zM661 281h5v1h-5zM667 281h1v1h-1zM669 281h1v1h-1zM671 281h4v1h-4zM676 281h3v1h-3zM681 281h1v1h-1zM683 281h5v1h-5zM689 281h3v1h-3zM548 282h4v1h-4zM554 282h2v1h-2zM558 282h1v1h-1zM560 282h5v1h-5zM566 282h1v1h-1zM568 282h4v1h-4zM573 282h6v1h-6zM580 282h2v1h-2zM583 282h5v1h-5zM589 282h2v1h-2zM592 282h4v2h-4zM597 282h1v1h-1zM600 282h3v1h-3zM604 282h4v2h-4zM609 282h2v1h-2zM629 282h2v1h-2zM632 282h3v1h-3zM636 282h5v1h-5zM642 282h1v1h-1zM646 282h4v1h-4zM655 282h4v1h-4zM660 282h1v1h-1zM662 282h3v1h-3zM666 282h3v1h-3zM670 282h6v1h-6zM677 282h1v1h-1zM679 282h3v1h-3zM683 282h3v1h-3zM689 282h1v1h-1zM692 282h3v1h-3zM548 283h3v1h-3zM553 283h5v1h-5zM559 283h1v1h-1zM562 283h2v1h-2zM565 283h2v1h-2zM568 283h3v1h-3zM572 283h1v1h-1zM574 283h4v1h-4zM579 283h4v1h-4zM584 283h2v1h-2zM588 283h3v1h-3zM599 283h4v1h-4zM612 283h2v1h-2zM615 283h4v2h-4zM620 283h4v4h-4zM625 283h2v1h-2zM634 283h1v1h-1zM636 283h4v1h-4zM641 283h4v2h-4zM647 283h3v1h-3zM651 283h3v2h-3zM657 283h1v1h-1zM659 283h3v1h-3zM663 283h1v1h-1zM665 283h5v1h-5zM671 283h3v1h-3zM676 283h1v1h-1zM678 283h5v1h-5zM684 283h1v1h-1zM686 283h3v1h-3zM690 283h5v1h-5zM546 284h1v1h-1zM550 284h1v1h-1zM553 284h4v1h-4zM559 284h2v1h-2zM563 284h1v1h-1zM565 284h3v1h-3zM569 284h1v1h-1zM571 284h3v1h-3zM575 284h1v1h-1zM578 284h6v1h-6zM587 284h5v1h-5zM593 284h1v1h-1zM596 284h3v1h-3zM600 284h4v1h-4zM605 284h1v1h-1zM608 284h1v1h-1zM610 284h4v1h-4zM625 284h4v2h-4zM630 284h2v1h-2zM637 284h3v1h-3zM646 284h1v1h-1zM655 284h1v1h-1zM658 284h5v1h-5zM664 284h5v1h-5zM670 284h1v1h-1zM672 284h1v1h-1zM674 284h4v1h-4zM679 284h5v1h-5zM685 284h5v2h-5zM691 284h5v1h-5zM546 285h3v1h-3zM551 285h1v1h-1zM555 285h1v1h-1zM558 285h5v1h-5zM564 285h5v1h-5zM570 285h5v1h-5zM577 285h1v1h-1zM580 285h3v1h-3zM584 285h3v1h-3zM588 285h4v1h-4zM595 285h4v1h-4zM600 285h3v1h-3zM606 285h3v1h-3zM610 285h5v1h-5zM616 285h3v2h-3zM630 285h4v1h-4zM635 285h2v1h-2zM640 285h5v1h-5zM646 285h2v1h-2zM650 285h3v1h-3zM655 285h2v1h-2zM659 285h3v1h-3zM666 285h2v1h-2zM670 285h2v1h-2zM673 285h5v1h-5zM679 285h3v1h-3zM691 285h4v1h-4zM545 286h4v2h-4zM551 286h3v1h-3zM557 286h5v1h-5zM565 286h3v1h-3zM569 286h1v1h-1zM571 286h3v1h-3zM576 286h3v1h-3zM581 286h1v1h-1zM583 286h4v1h-4zM588 286h2v1h-2zM592 286h2v1h-2zM595 286h5v1h-5zM603 286h2v1h-2zM606 286h4v2h-4zM611 286h4v1h-4zM625 286h3v1h-3zM629 286h4v2h-4zM634 286h5v1h-5zM641 286h3v1h-3zM645 286h5v1h-5zM652 286h1v1h-1zM654 286h4v1h-4zM660 286h1v1h-1zM662 286h4v1h-4zM667 286h1v1h-1zM669 286h4v1h-4zM674 286h5v1h-5zM680 286h1v1h-1zM682 286h3v1h-3zM686 286h3v1h-3zM692 286h1v1h-1zM695 286h2v1h-2zM550 287h4v2h-4zM556 287h1v1h-1zM559 287h2v1h-2zM562 287h2v1h-2zM566 287h1v1h-1zM568 287h2v1h-2zM571 287h2v1h-2zM575 287h6v1h-6zM582 287h1v1h-1zM584 287h4v1h-4zM590 287h5v1h-5zM596 287h3v1h-3zM601 287h4v1h-4zM611 287h2v1h-2zM627 287h1v1h-1zM634 287h4v1h-4zM639 287h2v1h-2zM643 287h1v1h-1zM645 287h4v1h-4zM650 287h1v1h-1zM653 287h6v1h-6zM661 287h6v1h-6zM668 287h5v1h-5zM674 287h3v1h-3zM679 287h1v1h-1zM681 287h4v1h-4zM686 287h1v1h-1zM689 287h3v1h-3zM693 287h5v2h-5zM544 288h1v1h-1zM547 288h1v1h-1zM556 288h2v1h-2zM560 288h1v1h-1zM562 288h4v1h-4zM567 288h4v1h-4zM572 288h1v1h-1zM574 288h1v2h-1zM576 288h4v1h-4zM581 288h2v1h-2zM584 288h3v1h-3zM589 288h1v1h-1zM591 288h4v1h-4zM596 288h1v1h-1zM599 288h2v1h-2zM602 288h4v2h-4zM607 288h2v1h-2zM613 288h2v1h-2zM616 288h4v2h-4zM621 288h4v2h-4zM626 288h1v1h-1zM631 288h1v1h-1zM633 288h5v1h-5zM639 288h4v1h-4zM645 288h3v1h-3zM650 288h2v1h-2zM655 288h3v1h-3zM659 288h1v1h-1zM662 288h4v1h-4zM667 288h1v1h-1zM669 288h3v1h-3zM675 288h1v1h-1zM677 288h4v1h-4zM682 288h4v1h-4zM687 288h5v1h-5zM543 289h4v2h-4zM549 289h1v1h-1zM552 289h1v1h-1zM555 289h5v1h-5zM561 289h4v1h-4zM566 289h6v1h-6zM576 289h3v1h-3zM580 289h4v1h-4zM585 289h1v1h-1zM587 289h3v1h-3zM591 289h5v1h-5zM597 289h4v1h-4zM609 289h1v1h-1zM611 289h4v1h-4zM626 289h4v1h-4zM635 289h2v1h-2zM638 289h4v1h-4zM643 289h2v1h-2zM647 289h1v1h-1zM649 289h5v1h-5zM656 289h1v1h-1zM658 289h3v1h-3zM662 289h3v1h-3zM666 289h3v1h-3zM670 289h1v1h-1zM672 289h3v1h-3zM676 289h5v1h-5zM682 289h3v1h-3zM688 289h5v1h-5zM694 289h4v1h-4zM548 290h4v2h-4zM554 290h5v1h-5zM560 290h1v1h-1zM563 290h2v1h-2zM568 290h3v1h-3zM573 290h3v1h-3zM577 290h1v1h-1zM579 290h6v1h-6zM586 290h5v1h-5zM592 290h2v1h-2zM597 290h5v2h-5zM603 290h1v1h-1zM606 290h4v1h-4zM611 290h5v1h-5zM617 290h3v2h-3zM621 290h3v2h-3zM625 290h5v1h-5zM631 290h4v1h-4zM639 290h3v1h-3zM643 290h4v1h-4zM648 290h5v1h-5zM654 290h1v1h-1zM657 290h5v1h-5zM663 290h1v1h-1zM665 290h4v1h-4zM671 290h5v1h-5zM677 290h5v1h-5zM683 290h1v1h-1zM685 290h2v1h-2zM688 290h3v1h-3zM694 290h2v1h-2zM698 290h2v1h-2zM542 291h5v1h-5zM556 291h2v1h-2zM560 291h2v1h-2zM565 291h2v1h-2zM569 291h1v1h-1zM572 291h5v1h-5zM578 291h1v1h-1zM581 291h3v1h-3zM585 291h1v1h-1zM587 291h5v1h-5zM594 291h2v1h-2zM604 291h2v1h-2zM607 291h4v2h-4zM612 291h4v1h-4zM625 291h4v1h-4zM630 291h4v2h-4zM635 291h3v1h-3zM642 291h4v1h-4zM650 291h2v1h-2zM654 291h2v1h-2zM658 291h3v1h-3zM664 291h6v1h-6zM672 291h4v1h-4zM677 291h3v1h-3zM682 291h1v1h-1zM684 291h4v1h-4zM689 291h1v1h-1zM691 291h3v1h-3zM696 291h4v1h-4zM544 292h2v1h-2zM547 292h5v1h-5zM553 292h2v1h-2zM557 292h1v1h-1zM559 292h5v1h-5zM565 292h4v1h-4zM571 292h1v1h-1zM573 292h3v1h-3zM578 292h2v1h-2zM582 292h1v1h-1zM584 292h2v1h-2zM587 292h4v1h-4zM593 292h4v1h-4zM598 292h2v1h-2zM602 292h4v1h-4zM612 292h2v1h-2zM627 292h2v1h-2zM635 292h4v1h-4zM643 292h3v1h-3zM647 292h2v1h-2zM651 292h1v1h-1zM653 292h5v1h-5zM659 292h1v1h-1zM661 292h3v1h-3zM665 292h3v1h-3zM670 292h1v1h-1zM672 292h3v1h-3zM678 292h1v1h-1zM680 292h3v1h-3zM684 292h5v1h-5zM690 292h5v2h-5zM696 292h5v1h-5zM541 293h2v1h-2zM545 293h1v1h-1zM549 293h2v1h-2zM553 293h4v1h-4zM558 293h5v1h-5zM564 293h4v1h-4zM571 293h2v1h-2zM574 293h1v1h-1zM577 293h5v1h-5zM583 293h4v1h-4zM588 293h1v1h-1zM591 293h1v1h-1zM593 293h5v1h-5zM600 293h2v1h-2zM603 293h4v2h-4zM608 293h2v1h-2zM614 293h1v1h-1zM616 293h4v4h-4zM621 293h3v4h-3zM625 293h2v1h-2zM632 293h1v1h-1zM634 293h4v1h-4zM639 293h3v1h-3zM647 293h4v1h-4zM652 293h4v1h-4zM658 293h1v1h-1zM660 293h5v1h-5zM666 293h1v1h-1zM668 293h4v1h-4zM673 293h1v1h-1zM675 293h3v1h-3zM679 293h5v2h-5zM685 293h2v1h-2zM696 293h4v1h-4zM541 294h4v1h-4zM546 294h2v1h-2zM550 294h1v1h-1zM552 294h4v1h-4zM560 294h2v1h-2zM563 294h1v1h-1zM566 294h2v1h-2zM570 294h4v1h-4zM576 294h5v1h-5zM582 294h6v1h-6zM589 294h4v1h-4zM594 294h3v1h-3zM598 294h4v1h-4zM611 294h4v2h-4zM625 294h4v2h-4zM630 294h2v1h-2zM635 294h3v1h-3zM639 294h5v1h-5zM646 294h4v1h-4zM651 294h1v1h-1zM654 294h1v1h-1zM656 294h4v1h-4zM661 294h5v1h-5zM667 294h5v1h-5zM674 294h4v1h-4zM685 294h1v1h-1zM687 294h3v1h-3zM691 294h3v1h-3zM697 294h1v1h-1zM700 294h1v1h-1zM540 295h4v1h-4zM546 295h4v1h-4zM551 295h1v1h-1zM554 295h2v1h-2zM557 295h2v1h-2zM561 295h1v1h-1zM563 295h2v1h-2zM569 295h4v1h-4zM575 295h1v1h-1zM578 295h2v1h-2zM581 295h1v1h-1zM584 295h3v1h-3zM588 295h5v1h-5zM594 295h1v1h-1zM598 295h5v2h-5zM604 295h1v1h-1zM607 295h3v1h-3zM630 295h4v1h-4zM638 295h5v1h-5zM644 295h1v1h-1zM647 295h2v1h-2zM651 295h2v1h-2zM655 295h5v1h-5zM661 295h3v1h-3zM666 295h1v1h-1zM668 295h5v1h-5zM674 295h5v1h-5zM680 295h3v1h-3zM686 295h4v1h-4zM691 295h1v1h-1zM694 295h3v1h-3zM698 295h4v2h-4zM541 296h3v1h-3zM545 296h4v1h-4zM551 296h2v1h-2zM557 296h4v1h-4zM562 296h5v1h-5zM568 296h1v1h-1zM571 296h2v1h-2zM575 296h2v1h-2zM579 296h1v1h-1zM581 296h2v1h-2zM585 296h1v1h-1zM587 296h1v1h-1zM590 296h4v1h-4zM595 296h2v1h-2zM606 296h5v1h-5zM612 296h3v1h-3zM625 296h3v1h-3zM629 296h4v2h-4zM634 296h3v1h-3zM639 296h3v1h-3zM644 296h3v1h-3zM648 296h1v1h-1zM650 296h5v1h-5zM656 296h5v1h-5zM662 296h1v1h-1zM664 296h3v1h-3zM668 296h3v1h-3zM673 296h1v1h-1zM675 296h2v1h-2zM680 296h1v1h-1zM683 296h2v1h-2zM686 296h5v1h-5zM692 296h5v2h-5zM546 297h3v1h-3zM550 297h5v1h-5zM556 297h4v1h-4zM562 297h4v1h-4zM568 297h2v1h-2zM574 297h5v1h-5zM580 297h5v1h-5zM586 297h3v1h-3zM591 297h1v1h-1zM594 297h4v1h-4zM599 297h2v1h-2zM603 297h3v1h-3zM607 297h4v2h-4zM612 297h2v1h-2zM627 297h1v1h-1zM634 297h4v1h-4zM641 297h1v1h-1zM643 297h4v1h-4zM649 297h5v1h-5zM656 297h3v1h-3zM661 297h1v1h-1zM663 297h5v1h-5zM669 297h1v1h-1zM671 297h3v1h-3zM675 297h1v1h-1zM677 297h3v1h-3zM681 297h5v1h-5zM687 297h4v1h-4zM698 297h5v1h-5zM539 298h3v1h-3zM550 298h4v2h-4zM557 298h3v1h-3zM562 298h3v1h-3zM567 298h5v1h-5zM574 298h4v1h-4zM581 298h3v1h-3zM585 298h6v1h-6zM592 298h1v1h-1zM594 298h5v1h-5zM602 298h4v1h-4zM616 298h2v1h-2zM619 298h4v2h-4zM624 298h2v1h-2zM631 298h1v1h-1zM633 298h5v1h-5zM639 298h2v1h-2zM643 298h3v1h-3zM648 298h1v1h-1zM650 298h3v1h-3zM654 298h2v1h-2zM657 298h1v1h-1zM659 298h4v1h-4zM664 298h5v1h-5zM670 298h5v1h-5zM676 298h5v2h-5zM682 298h4v2h-4zM687 298h2v1h-2zM691 298h1v1h-1zM693 298h4v1h-4zM699 298h3v1h-3zM539 299h4v1h-4zM544 299h3v1h-3zM555 299h1v1h-1zM564 299h1v1h-1zM566 299h5v1h-5zM572 299h1v1h-1zM576 299h1v1h-1zM578 299h2v1h-2zM582 299h1v1h-1zM584 299h1v1h-1zM586 299h4v1h-4zM591 299h3v1h-3zM595 299h3v1h-3zM599 299h3v1h-3zM603 299h4v2h-4zM608 299h1v1h-1zM611 299h2v1h-2zM614 299h4v2h-4zM624 299h4v1h-4zM629 299h1v1h-1zM634 299h3v1h-3zM638 299h5v1h-5zM645 299h1v1h-1zM647 299h3v1h-3zM651 299h1v1h-1zM653 299h4v1h-4zM658 299h5v1h-5zM664 299h3v1h-3zM669 299h1v1h-1zM671 299h4v1h-4zM689 299h3v1h-3zM693 299h2v1h-2zM697 299h1v1h-1zM699 299h1v1h-1zM702 299h1v1h-1zM538 300h4v1h-4zM544 300h4v1h-4zM549 300h1v1h-1zM552 300h1v1h-1zM555 300h3v1h-3zM560 300h3v3h-3zM568 300h2v1h-2zM572 300h3v1h-3zM577 300h5v1h-5zM584 300h2v1h-2zM587 300h2v1h-2zM590 300h5v1h-5zM596 300h1v1h-1zM598 300h4v1h-4zM609 300h4v1h-4zM619 300h3v2h-3zM623 300h4v2h-4zM628 300h4v1h-4zM633 300h1v1h-1zM636 300h1v1h-1zM638 300h4v1h-4zM643 300h1v1h-1zM646 300h5v1h-5zM652 300h6v1h-6zM659 300h3v1h-3zM665 300h1v1h-1zM667 300h3v1h-3zM671 300h3v1h-3zM677 300h4v1h-4zM683 300h1v1h-1zM686 300h1v1h-1zM688 300h5v1h-5zM695 300h3v1h-3zM700 300h4v1h-4zM540 301h2v1h-2zM544 301h3v1h-3zM549 301h3v1h-3zM554 301h4v2h-4zM565 301h2v1h-2zM569 301h1v1h-1zM571 301h4v2h-4zM576 301h5v1h-5zM583 301h4v1h-4zM588 301h1v1h-1zM591 301h5v1h-5zM598 301h5v1h-5zM604 301h1v1h-1zM607 301h2v1h-2zM610 301h4v2h-4zM615 301h3v1h-3zM628 301h3v1h-3zM632 301h4v2h-4zM638 301h3v1h-3zM643 301h2v1h-2zM647 301h3v1h-3zM651 301h1v1h-1zM653 301h3v1h-3zM658 301h1v1h-1zM660 301h1v1h-1zM662 301h3v1h-3zM666 301h5v1h-5zM672 301h1v1h-1zM674 301h2v1h-2zM677 301h2v1h-2zM681 301h2v1h-2zM684 301h4v3h-4zM689 301h4v1h-4zM694 301h4v1h-4zM699 301h5v1h-5zM538 302h2v1h-2zM543 302h1v1h-1zM546 302h1v1h-1zM548 302h4v1h-4zM565 302h4v1h-4zM578 302h3v1h-3zM582 302h6v1h-6zM589 302h1v1h-1zM591 302h4v1h-4zM596 302h2v1h-2zM599 302h4v1h-4zM605 302h4v1h-4zM615 302h2v1h-2zM625 302h1v1h-1zM627 302h4v1h-4zM637 302h1v1h-1zM640 302h1v1h-1zM642 302h5v1h-5zM648 302h1v1h-1zM650 302h3v1h-3zM654 302h1v1h-1zM656 302h4v1h-4zM661 302h5v1h-5zM667 302h4v1h-4zM673 302h4v2h-4zM679 302h4v1h-4zM689 302h2v1h-2zM693 302h1v1h-1zM695 302h4v1h-4zM700 302h5v1h-5zM537 303h5v1h-5zM543 303h3v1h-3zM549 303h3v1h-3zM553 303h1v1h-1zM556 303h1v1h-1zM564 303h4v1h-4zM570 303h1v1h-1zM573 303h1v1h-1zM575 303h3v1h-3zM581 303h1v1h-1zM584 303h3v1h-3zM588 303h3v1h-3zM592 303h1v1h-1zM595 303h4v1h-4zM600 303h1v1h-1zM603 303h2v1h-2zM606 303h4v2h-4zM611 303h2v1h-2zM617 303h3v1h-3zM621 303h3v4h-3zM629 303h1v1h-1zM631 303h4v1h-4zM637 303h2v1h-2zM641 303h5v1h-5zM647 303h1v1h-1zM649 303h5v1h-5zM655 303h5v1h-5zM662 303h4v2h-4zM667 303h2v1h-2zM671 303h1v1h-1zM678 303h5v1h-5zM691 303h3v1h-3zM695 303h2v1h-2zM700 303h3v1h-3zM537 304h4v2h-4zM542 304h5v1h-5zM553 304h3v1h-3zM558 304h3v1h-3zM565 304h3v1h-3zM569 304h4v3h-4zM575 304h5v1h-5zM581 304h2v1h-2zM585 304h1v1h-1zM587 304h5v1h-5zM593 304h1v2h-1zM595 304h5v1h-5zM601 304h4v1h-4zM613 304h2v1h-2zM616 304h4v3h-4zM625 304h4v2h-4zM633 304h2v1h-2zM636 304h5v1h-5zM642 304h3v1h-3zM646 304h3v1h-3zM650 304h4v1h-4zM656 304h5v1h-5zM669 304h4v2h-4zM674 304h3v1h-3zM679 304h4v1h-4zM685 304h1v1h-1zM688 304h1v1h-1zM690 304h5v1h-5zM697 304h3v1h-3zM703 304h2v1h-2zM542 305h4v2h-4zM547 305h3v1h-3zM552 305h5v1h-5zM558 305h4v1h-4zM574 305h5v1h-5zM580 305h5v1h-5zM586 305h1v1h-1zM589 305h2v1h-2zM595 305h4v1h-4zM601 305h5v2h-5zM607 305h1v1h-1zM611 305h4v1h-4zM630 305h3v1h-3zM635 305h5v1h-5zM641 305h1v1h-1zM643 305h1v1h-1zM645 305h4v1h-4zM650 305h3v1h-3zM654 305h1v1h-1zM656 305h3v1h-3zM661 305h1v1h-1zM663 305h1v1h-1zM666 305h2v1h-2zM674 305h1v1h-1zM677 305h1v1h-1zM679 305h2v1h-2zM683 305h1v1h-1zM686 305h4v1h-4zM691 305h4v1h-4zM696 305h4v2h-4zM701 305h5v2h-5zM536 306h1v1h-1zM539 306h1v1h-1zM547 306h4v1h-4zM552 306h4v1h-4zM557 306h5v1h-5zM563 306h3v1h-3zM575 306h3v1h-3zM579 306h5v1h-5zM586 306h2v1h-2zM590 306h1v1h-1zM592 306h3v1h-3zM596 306h1v1h-1zM599 306h1v1h-1zM608 306h3v1h-3zM612 306h3v2h-3zM625 306h3v1h-3zM629 306h4v2h-4zM634 306h1v1h-1zM637 306h2v1h-2zM641 306h2v1h-2zM644 306h6v1h-6zM651 306h1v1h-1zM653 306h3v1h-3zM657 306h1v1h-1zM659 306h4v1h-4zM664 306h4v1h-4zM669 306h5v1h-5zM675 306h4v2h-4zM681 306h3v1h-3zM685 306h5v1h-5zM691 306h3v1h-3zM536 307h3v1h-3zM541 307h1v1h-1zM544 307h1v1h-1zM546 307h5v1h-5zM553 307h3v1h-3zM558 307h3v1h-3zM563 307h4v1h-4zM568 307h1v1h-1zM571 307h1v1h-1zM577 307h1v1h-1zM581 307h3v1h-3zM585 307h5v1h-5zM591 307h5v1h-5zM598 307h3v1h-3zM602 307h2v1h-2zM607 307h4v1h-4zM627 307h1v1h-1zM634 307h2v1h-2zM638 307h1v1h-1zM640 307h4v1h-4zM645 307h3v1h-3zM650 307h1v1h-1zM652 307h5v1h-5zM658 307h5v1h-5zM664 307h5v1h-5zM670 307h3v1h-3zM680 307h5v1h-5zM686 307h5v1h-5zM694 307h1v1h-1zM697 307h3v1h-3zM702 307h3v1h-3zM535 308h5v1h-5zM541 308h3v1h-3zM547 308h3v1h-3zM557 308h1v1h-1zM560 308h1v1h-1zM563 308h3v1h-3zM567 308h4v1h-4zM573 308h3v3h-3zM578 308h3v1h-3zM584 308h5v1h-5zM590 308h1v1h-1zM593 308h2v1h-2zM597 308h5v1h-5zM604 308h2v1h-2zM607 308h5v1h-5zM616 308h4v2h-4zM621 308h4v2h-4zM626 308h1v1h-1zM629 308h3v1h-3zM633 308h5v1h-5zM639 308h5v1h-5zM646 308h1v1h-1zM648 308h4v1h-4zM653 308h4v1h-4zM658 308h6v1h-6zM665 308h3v1h-3zM670 308h1v1h-1zM673 308h2v1h-2zM676 308h3v1h-3zM681 308h4v1h-4zM686 308h4v1h-4zM692 308h4v3h-4zM697 308h1v1h-1zM700 308h1v1h-1zM702 308h1v1h-1zM705 308h1v1h-1zM535 309h4v1h-4zM540 309h5v1h-5zM546 309h1v1h-1zM549 309h1v1h-1zM551 309h3v1h-3zM557 309h3v1h-3zM562 309h1v1h-1zM565 309h1v1h-1zM567 309h5v1h-5zM578 309h5v1h-5zM586 309h2v1h-2zM590 309h2v1h-2zM594 309h1v1h-1zM596 309h1v1h-1zM598 309h3v1h-3zM602 309h5v1h-5zM608 309h3v1h-3zM613 309h2v1h-2zM626 309h3v1h-3zM631 309h1v1h-1zM633 309h4v1h-4zM638 309h1v1h-1zM640 309h3v1h-3zM644 309h2v1h-2zM647 309h5v1h-5zM653 309h2v1h-2zM657 309h1v1h-1zM659 309h3v1h-3zM665 309h1v1h-1zM668 309h1v1h-1zM671 309h4v1h-4zM676 309h1v1h-1zM679 309h1v1h-1zM681 309h3v1h-3zM687 309h1v1h-1zM690 309h1v1h-1zM698 309h3v1h-3zM703 309h3v1h-3zM537 310h2v1h-2zM540 310h4v1h-4zM546 310h3v1h-3zM551 310h4v1h-4zM556 310h4v2h-4zM561 310h4v2h-4zM567 310h4v2h-4zM577 310h5v1h-5zM583 310h2v1h-2zM587 310h1v1h-1zM589 310h5v1h-5zM595 310h3v1h-3zM599 310h1v1h-1zM601 310h1v1h-1zM603 310h5v1h-5zM611 310h5v1h-5zM617 310h3v2h-3zM621 310h3v2h-3zM625 310h4v2h-4zM633 310h3v1h-3zM638 310h2v1h-2zM641 310h1v1h-1zM643 310h4v1h-4zM648 310h4v1h-4zM655 310h3v1h-3zM659 310h1v1h-1zM662 310h3v1h-3zM666 310h4v2h-4zM671 310h5v1h-5zM677 310h4v3h-4zM684 310h2v1h-2zM688 310h3v1h-3zM697 310h4v1h-4zM702 310h5v1h-5zM535 311h2v1h-2zM542 311h2v1h-2zM545 311h5v1h-5zM551 311h3v1h-3zM578 311h4v1h-4zM583 311h4v1h-4zM588 311h5v1h-5zM594 311h5v1h-5zM601 311h2v1h-2zM604 311h3v1h-3zM608 311h3v1h-3zM612 311h4v2h-4zM630 311h3v2h-3zM635 311h1v1h-1zM637 311h4v1h-4zM642 311h6v1h-6zM649 311h1v1h-1zM652 311h1v1h-1zM654 311h5v1h-5zM660 311h5v2h-5zM671 311h4v1h-4zM682 311h4v2h-4zM687 311h5v2h-5zM693 311h2v1h-2zM697 311h5v1h-5zM703 311h4v1h-4zM535 312h4v1h-4zM540 312h2v1h-2zM545 312h4v1h-4zM552 312h2v1h-2zM558 312h1v1h-1zM560 312h5v1h-5zM566 312h1v1h-1zM569 312h1v1h-1zM571 312h3v1h-3zM577 312h1v1h-1zM580 312h1v1h-1zM582 312h4v1h-4zM590 312h2v1h-2zM593 312h1v1h-1zM596 312h2v1h-2zM600 312h4v1h-4zM605 312h1v1h-1zM607 312h4v1h-4zM627 312h1v1h-1zM634 312h1v1h-1zM636 312h5v1h-5zM643 312h3v1h-3zM648 312h1v1h-1zM650 312h4v2h-4zM655 312h4v1h-4zM666 312h5v1h-5zM672 312h1v1h-1zM675 312h1v1h-1zM695 312h2v1h-2zM698 312h2v1h-2zM703 312h2v1h-2zM534 313h5v1h-5zM540 313h4v1h-4zM547 313h2v1h-2zM550 313h2v1h-2zM556 313h1v1h-1zM562 313h2v1h-2zM566 313h3v1h-3zM571 313h4v1h-4zM576 313h4v2h-4zM583 313h3v1h-3zM587 313h2v1h-2zM591 313h1v1h-1zM593 313h2v1h-2zM597 313h1v1h-1zM599 313h6v1h-6zM606 313h1v1h-1zM608 313h4v2h-4zM613 313h1v1h-1zM617 313h2v1h-2zM620 313h4v2h-4zM625 313h1v1h-1zM629 313h3v1h-3zM634 313h2v1h-2zM637 313h3v1h-3zM641 313h2v1h-2zM644 313h1v1h-1zM646 313h3v1h-3zM655 313h2v1h-2zM659 313h1v1h-1zM661 313h4v1h-4zM667 313h2v1h-2zM673 313h3v1h-3zM678 313h2v1h-2zM683 313h4v1h-4zM688 313h2v1h-2zM693 313h4v2h-4zM700 313h2v1h-2zM705 313h2v1h-2zM534 314h4v1h-4zM539 314h5v1h-5zM545 314h2v1h-2zM550 314h4v2h-4zM555 314h4v2h-4zM560 314h2v1h-2zM565 314h5v1h-5zM571 314h3v1h-3zM587 314h4v1h-4zM592 314h5v1h-5zM598 314h1v1h-1zM601 314h3v1h-3zM605 314h2v1h-2zM615 314h4v1h-4zM625 314h3v1h-3zM631 314h1v1h-1zM633 314h4v1h-4zM638 314h1v1h-1zM640 314h4v1h-4zM645 314h5v2h-5zM651 314h4v1h-4zM657 314h3v1h-3zM661 314h2v1h-2zM665 314h1v1h-1zM669 314h2v1h-2zM672 314h5v1h-5zM680 314h2v1h-2zM683 314h2v1h-2zM690 314h2v1h-2zM698 314h4v1h-4zM704 314h3v1h-3zM536 315h2v1h-2zM539 315h4v1h-4zM545 315h4v1h-4zM560 315h4v1h-4zM565 315h4v1h-4zM572 315h2v1h-2zM575 315h5v1h-5zM581 315h3v1h-3zM586 315h4v1h-4zM592 315h4v2h-4zM598 315h2v1h-2zM602 315h1v1h-1zM604 315h4v1h-4zM609 315h1v1h-1zM612 315h3v2h-3zM616 315h3v2h-3zM620 315h3v2h-3zM624 315h4v1h-4zM629 315h1v1h-1zM632 315h5v1h-5zM639 315h5v1h-5zM651 315h2v1h-2zM656 315h5v1h-5zM663 315h3v1h-3zM667 315h5v1h-5zM673 315h4v1h-4zM678 315h4v2h-4zM685 315h2v1h-2zM688 315h4v1h-4zM694 315h3v1h-3zM698 315h5v1h-5zM704 315h4v2h-4zM534 316h2v1h-2zM541 316h2v1h-2zM544 316h5v1h-5zM550 316h3v1h-3zM554 316h4v1h-4zM559 316h5v1h-5zM567 316h2v1h-2zM570 316h2v1h-2zM577 316h2v1h-2zM581 316h4v1h-4zM587 316h3v1h-3zM597 316h5v1h-5zM603 316h1v1h-1zM605 316h4v1h-4zM610 316h1v1h-1zM624 316h3v1h-3zM629 316h2v1h-2zM633 316h3v1h-3zM637 316h2v1h-2zM640 316h3v1h-3zM646 316h2v1h-2zM653 316h3v1h-3zM657 316h4v1h-4zM662 316h5v1h-5zM668 316h4v2h-4zM673 316h2v1h-2zM683 316h4v1h-4zM688 316h5v1h-5zM694 316h2v1h-2zM699 316h4v1h-4zM534 317h4v3h-4zM539 317h2v1h-2zM544 317h4v1h-4zM551 317h2v1h-2zM556 317h2v1h-2zM559 317h4v1h-4zM565 317h2v1h-2zM570 317h4v2h-4zM575 317h2v1h-2zM581 317h3v1h-3zM591 317h1v1h-1zM594 317h1v1h-1zM597 317h4v1h-4zM603 317h2v1h-2zM606 317h1v1h-1zM609 317h2v1h-2zM612 317h4v1h-4zM617 317h1v1h-1zM625 317h2v1h-2zM628 317h5v1h-5zM634 317h1v1h-1zM636 317h3v1h-3zM640 317h1v1h-1zM643 317h2v1h-2zM646 317h1v1h-1zM648 317h3v1h-3zM652 317h4v1h-4zM657 317h3v1h-3zM663 317h4v1h-4zM675 317h2v1h-2zM679 317h3v1h-3zM683 317h5v1h-5zM689 317h4v1h-4zM696 317h2v1h-2zM699 317h2v1h-2zM704 317h2v1h-2zM539 318h4v1h-4zM546 318h2v1h-2zM549 318h2v1h-2zM554 318h2v1h-2zM561 318h2v1h-2zM565 318h4v1h-4zM575 318h4v1h-4zM580 318h1v1h-1zM583 318h1v1h-1zM585 318h3v1h-3zM590 318h4v3h-4zM596 318h1v1h-1zM599 318h2v1h-2zM602 318h4v1h-4zM607 318h5v1h-5zM613 318h2v1h-2zM627 318h4v1h-4zM633 318h1v1h-1zM635 318h5v1h-5zM641 318h5v1h-5zM647 318h4v1h-4zM653 318h4v1h-4zM660 318h2v1h-2zM663 318h3v1h-3zM669 318h1v1h-1zM672 318h1v1h-1zM674 318h4v2h-4zM679 318h2v1h-2zM684 318h4v1h-4zM689 318h2v1h-2zM694 318h4v2h-4zM701 318h2v1h-2zM706 318h2v1h-2zM539 319h3v2h-3zM544 319h2v1h-2zM549 319h4v1h-4zM554 319h4v2h-4zM559 319h2v1h-2zM564 319h4v2h-4zM569 319h4v1h-4zM574 319h4v1h-4zM580 319h3v1h-3zM585 319h4v1h-4zM595 319h4v3h-4zM601 319h4v1h-4zM608 319h5v1h-5zM629 319h1v1h-1zM631 319h4v1h-4zM636 319h3v1h-3zM642 319h5v1h-5zM648 319h4v1h-4zM653 319h2v1h-2zM658 319h5v2h-5zM666 319h2v1h-2zM670 319h3v1h-3zM681 319h2v1h-2zM691 319h2v1h-2zM699 319h4v2h-4zM704 319h4v1h-4zM536 320h2v1h-2zM544 320h4v1h-4zM549 320h3v2h-3zM559 320h4v1h-4zM571 320h2v1h-2zM576 320h2v1h-2zM579 320h5v1h-5zM585 320h3v1h-3zM603 320h2v1h-2zM606 320h2v1h-2zM609 320h3v1h-3zM630 320h5v1h-5zM636 320h1v1h-1zM639 320h2v1h-2zM642 320h3v1h-3zM648 320h2v1h-2zM655 320h2v1h-2zM664 320h4v2h-4zM669 320h5v2h-5zM675 320h3v1h-3zM679 320h4v2h-4zM684 320h4v2h-4zM689 320h4v1h-4zM695 320h3v1h-3zM704 320h5v1h-5zM534 321h2v1h-2zM543 321h4v2h-4zM556 321h2v1h-2zM559 321h3v2h-3zM569 321h2v1h-2zM574 321h2v1h-2zM579 321h4v1h-4zM586 321h2v1h-2zM589 321h1v1h-1zM592 321h1v1h-1zM600 321h2v1h-2zM606 321h3v1h-3zM610 321h1v1h-1zM631 321h3v1h-3zM637 321h5v1h-5zM645 321h3v1h-3zM650 321h2v1h-2zM654 321h4v2h-4zM659 321h2v1h-2zM675 321h2v1h-2zM689 321h5v1h-5zM700 321h4v1h-4zM705 321h4v1h-4zM534 322h4v1h-4zM539 322h3v2h-3zM554 322h2v1h-2zM564 322h4v2h-4zM569 322h4v1h-4zM574 322h4v1h-4zM581 322h2v1h-2zM584 322h2v1h-2zM589 322h3v1h-3zM594 322h1v1h-1zM597 322h1v1h-1zM600 322h4v1h-4zM605 322h5v1h-5zM632 322h1v1h-1zM634 322h3v1h-3zM638 322h4v1h-4zM643 322h5v1h-5zM649 322h4v2h-4zM661 322h2v1h-2zM665 322h2v1h-2zM670 322h2v1h-2zM677 322h2v1h-2zM680 322h4v1h-4zM685 322h4v1h-4zM690 322h4v1h-4zM695 322h4v4h-4zM700 322h2v1h-2zM705 322h2v1h-2zM533 323h4v2h-4zM549 323h3v2h-3zM554 323h4v1h-4zM569 323h3v1h-3zM573 323h5v1h-5zM579 323h2v1h-2zM584 323h4v1h-4zM589 323h4v1h-4zM594 323h3v1h-3zM599 323h5v1h-5zM607 323h2v1h-2zM633 323h4v1h-4zM638 323h3v1h-3zM644 323h4v1h-4zM655 323h3v1h-3zM659 323h4v1h-4zM667 323h2v1h-2zM672 323h2v1h-2zM675 323h4v3h-4zM685 323h2v1h-2zM702 323h2v1h-2zM707 323h2v1h-2zM538 324h4v2h-4zM543 324h4v4h-4zM553 324h5v1h-5zM559 324h3v1h-3zM563 324h4v2h-4zM568 324h4v1h-4zM573 324h4v1h-4zM579 324h4v1h-4zM584 324h3v2h-3zM588 324h4v1h-4zM593 324h5v1h-5zM601 324h2v1h-2zM604 324h2v1h-2zM608 324h1v1h-1zM633 324h5v1h-5zM641 324h2v1h-2zM644 324h3v1h-3zM650 324h4v1h-4zM655 324h2v1h-2zM659 324h5v1h-5zM665 324h4v3h-4zM670 324h4v3h-4zM680 324h4v4h-4zM687 324h2v1h-2zM690 324h4v4h-4zM700 324h4v3h-4zM705 324h4v3h-4zM548 325h4v1h-4zM553 325h4v1h-4zM558 325h4v3h-4zM575 325h2v1h-2zM578 325h5v1h-5zM590 325h2v1h-2zM593 325h4v1h-4zM599 325h2v1h-2zM604 325h4v2h-4zM634 325h2v1h-2zM639 325h4v1h-4zM647 325h2v1h-2zM650 325h2v1h-2zM657 325h2v1h-2zM660 325h4v1h-4zM685 325h4v3h-4zM533 326h4v4h-4zM550 326h2v1h-2zM555 326h2v1h-2zM568 326h4v4h-4zM573 326h2v1h-2zM578 326h4v1h-4zM588 326h2v1h-2zM595 326h2v1h-2zM599 326h4v1h-4zM636 326h2v1h-2zM639 326h5v1h-5zM645 326h4v3h-4zM652 326h2v1h-2zM655 326h4v3h-4zM660 326h2v1h-2zM538 327h4v4h-4zM548 327h2v1h-2zM553 327h2v1h-2zM563 327h4v4h-4zM573 327h4v3h-4zM580 327h2v1h-2zM583 327h4v3h-4zM588 327h4v3h-4zM593 327h2v1h-2zM598 327h4v2h-4zM605 327h2v1h-2zM634 327h4v1h-4zM640 327h4v1h-4zM650 327h4v3h-4zM662 327h2v1h-2zM665 327h2v1h-2zM670 327h2v1h-2zM675 327h4v4h-4zM695 327h4v4h-4zM548 328h4v3h-4zM553 328h4v3h-4zM578 328h2v1h-2zM593 328h4v3h-4zM603 328h2v1h-2zM634 328h5v1h-5zM660 328h4v3h-4zM667 328h2v1h-2zM672 328h2v1h-2zM685 328h2v1h-2zM700 328h4v4h-4zM705 328h4v4h-4zM543 329h4v4h-4zM558 329h4v4h-4zM578 329h4v3h-4zM603 329h4v3h-4zM635 329h4v1h-4zM640 329h4v3h-4zM665 329h4v3h-4zM670 329h4v3h-4zM680 329h4v4h-4zM687 329h2v1h-2zM690 329h4v4h-4zM598 330h4v3h-4zM645 330h4v4h-4zM655 330h4v3h-4zM685 330h4v3h-4zM533 331h4v4h-4zM568 331h4v3h-4zM573 331h4v4h-4zM583 331h4v2h-4zM588 331h4v1h-4zM635 331h4v3h-4zM650 331h4v3h-4zM538 332h4v3h-4zM548 332h4v4h-4zM553 332h4v4h-4zM563 332h4v3h-4zM588 332h5v1h-5zM594 332h3v1h-3zM631 332h3v1h-3zM642 332h2v1h-2zM660 332h4v4h-4zM675 332h4v3h-4zM695 332h4v3h-4zM578 333h4v1h-4zM584 333h3v2h-3zM589 333h4v1h-4zM594 333h4v2h-4zM603 333h4v1h-4zM630 333h4v1h-4zM640 333h2v1h-2zM657 333h2v1h-2zM665 333h4v4h-4zM670 333h4v4h-4zM700 333h4v4h-4zM705 333h4v4h-4zM543 334h4v3h-4zM558 334h4v1h-4zM568 334h2v1h-2zM578 334h5v1h-5zM589 334h2v1h-2zM599 334h4v3h-4zM604 334h4v2h-4zM632 334h2v1h-2zM637 334h2v1h-2zM640 334h4v2h-4zM652 334h2v1h-2zM655 334h2v1h-2zM680 334h4v3h-4zM685 334h4v4h-4zM690 334h4v3h-4zM538 335h2v1h-2zM558 335h5v1h-5zM564 335h1v1h-1zM570 335h2v1h-2zM579 335h4v1h-4zM591 335h2v1h-2zM594 335h2v1h-2zM630 335h2v1h-2zM635 335h2v1h-2zM645 335h4v2h-4zM650 335h2v1h-2zM655 335h4v3h-4zM677 335h2v1h-2zM697 335h2v1h-2zM533 336h4v1h-4zM540 336h2v1h-2zM559 336h4v1h-4zM565 336h2v1h-2zM568 336h4v1h-4zM573 336h4v1h-4zM579 336h2v1h-2zM584 336h3v1h-3zM589 336h5v2h-5zM596 336h2v1h-2zM605 336h1v1h-1zM608 336h1v1h-1zM629 336h4v2h-4zM634 336h5v1h-5zM642 336h2v1h-2zM650 336h4v1h-4zM675 336h2v1h-2zM695 336h2v1h-2zM533 337h5v1h-5zM539 337h3v1h-3zM543 337h2v1h-2zM548 337h4v2h-4zM553 337h4v2h-4zM559 337h2v1h-2zM564 337h3v1h-3zM568 337h5v1h-5zM574 337h4v2h-4zM581 337h2v1h-2zM584 337h4v1h-4zM595 337h4v2h-4zM600 337h1v1h-1zM603 337h1v1h-1zM606 337h3v1h-3zM635 337h3v1h-3zM640 337h2v1h-2zM645 337h3v1h-3zM650 337h3v1h-3zM660 337h4v2h-4zM675 337h4v3h-4zM682 337h2v1h-2zM692 337h2v1h-2zM695 337h4v3h-4zM534 338h4v1h-4zM539 338h4v2h-4zM545 338h2v1h-2zM561 338h2v1h-2zM564 338h4v2h-4zM569 338h4v1h-4zM579 338h4v1h-4zM585 338h3v1h-3zM590 338h3v1h-3zM601 338h4v1h-4zM606 338h4v1h-4zM628 338h1v1h-1zM631 338h1v1h-1zM633 338h2v1h-2zM637 338h1v1h-1zM639 338h5v1h-5zM647 338h1v1h-1zM652 338h1v1h-1zM657 338h2v1h-2zM665 338h4v2h-4zM670 338h4v2h-4zM680 338h2v1h-2zM690 338h2v1h-2zM700 338h4v3h-4zM705 338h4v3h-4zM534 339h2v1h-2zM544 339h3v1h-3zM549 339h4v2h-4zM554 339h4v2h-4zM559 339h4v3h-4zM569 339h2v1h-2zM574 339h2v1h-2zM579 339h5v1h-5zM585 339h2v1h-2zM590 339h1v1h-1zM593 339h1v1h-1zM595 339h3v1h-3zM600 339h5v1h-5zM606 339h3v1h-3zM610 339h1v1h-1zM627 339h3v1h-3zM633 339h4v1h-4zM639 339h4v2h-4zM645 339h1v1h-1zM650 339h1v1h-1zM655 339h2v1h-2zM659 339h4v1h-4zM680 339h4v2h-4zM685 339h4v2h-4zM690 339h4v3h-4zM536 340h2v1h-2zM539 340h2v1h-2zM544 340h4v2h-4zM571 340h2v1h-2zM576 340h2v1h-2zM580 340h4v1h-4zM587 340h2v1h-2zM591 340h4v1h-4zM598 340h2v1h-2zM601 340h4v1h-4zM606 340h1v1h-1zM609 340h4v1h-4zM626 340h1v1h-1zM628 340h3v1h-3zM632 340h5v1h-5zM644 340h4v2h-4zM649 340h4v2h-4zM655 340h3v1h-3zM661 340h2v1h-2zM664 340h4v1h-4zM669 340h4v1h-4zM677 340h2v1h-2zM697 340h2v1h-2zM534 341h4v3h-4zM541 341h2v1h-2zM564 341h4v1h-4zM569 341h5v1h-5zM575 341h4v3h-4zM580 341h2v1h-2zM585 341h4v1h-4zM590 341h5v1h-5zM596 341h4v1h-4zM601 341h2v1h-2zM605 341h1v1h-1zM607 341h5v1h-5zM613 341h2v1h-2zM624 341h3v1h-3zM628 341h2v1h-2zM631 341h1v1h-1zM634 341h2v1h-2zM637 341h2v1h-2zM641 341h1v1h-1zM654 341h4v1h-4zM659 341h2v1h-2zM666 341h2v1h-2zM671 341h2v1h-2zM675 341h2v1h-2zM680 341h3v1h-3zM684 341h4v1h-4zM695 341h2v1h-2zM702 341h2v1h-2zM707 341h2v1h-2zM539 342h4v1h-4zM544 342h2v1h-2zM549 342h4v1h-4zM554 342h4v1h-4zM559 342h2v1h-2zM564 342h5v1h-5zM570 342h4v1h-4zM582 342h2v1h-2zM585 342h5v1h-5zM591 342h4v1h-4zM596 342h5v1h-5zM603 342h4v1h-4zM609 342h2v1h-2zM613 342h3v1h-3zM617 342h1v1h-1zM621 342h2v1h-2zM624 342h4v2h-4zM631 342h2v1h-2zM635 342h1v1h-1zM637 342h4v1h-4zM644 342h3v1h-3zM649 342h3v1h-3zM656 342h2v1h-2zM659 342h4v1h-4zM664 342h2v1h-2zM669 342h2v1h-2zM675 342h4v1h-4zM682 342h1v1h-1zM686 342h2v1h-2zM692 342h2v1h-2zM695 342h4v1h-4zM700 342h2v1h-2zM705 342h2v1h-2zM539 343h5v1h-5zM546 343h2v1h-2zM549 343h5v1h-5zM555 343h4v2h-4zM561 343h2v1h-2zM565 343h4v1h-4zM570 343h2v1h-2zM580 343h5v1h-5zM586 343h3v1h-3zM591 343h2v1h-2zM595 343h1v1h-1zM597 343h3v1h-3zM601 343h1v1h-1zM603 343h5v1h-5zM610 343h1v1h-1zM612 343h4v1h-4zM617 343h2v1h-2zM620 343h3v1h-3zM630 343h5v1h-5zM636 343h5v1h-5zM642 343h2v1h-2zM646 343h1v1h-1zM648 343h1v1h-1zM651 343h1v1h-1zM654 343h2v1h-2zM658 343h5v1h-5zM664 343h4v1h-4zM669 343h4v1h-4zM674 343h5v1h-5zM680 343h1v1h-1zM684 343h2v1h-2zM690 343h2v1h-2zM694 343h5v1h-5zM700 343h4v1h-4zM705 343h4v1h-4zM534 344h2v1h-2zM540 344h4v1h-4zM545 344h3v1h-3zM550 344h4v1h-4zM560 344h4v3h-4zM565 344h2v1h-2zM572 344h3v1h-3zM576 344h1v1h-1zM581 344h4v2h-4zM586 344h1v1h-1zM589 344h2v1h-2zM593 344h3v1h-3zM597 344h1v1h-1zM600 344h3v1h-3zM604 344h3v1h-3zM608 344h1v1h-1zM612 344h3v1h-3zM616 344h3v2h-3zM620 344h4v2h-4zM625 344h2v1h-2zM629 344h1v1h-1zM631 344h3v1h-3zM635 344h1v1h-1zM638 344h2v1h-2zM642 344h4v1h-4zM647 344h4v1h-4zM653 344h4v3h-4zM659 344h3v1h-3zM663 344h4v1h-4zM668 344h5v1h-5zM675 344h3v1h-3zM680 344h3v1h-3zM684 344h4v2h-4zM690 344h3v1h-3zM694 344h4v1h-4zM699 344h4v2h-4zM704 344h5v1h-5zM536 345h2v1h-2zM540 345h2v1h-2zM545 345h4v2h-4zM550 345h2v1h-2zM555 345h2v1h-2zM567 345h3v1h-3zM571 345h4v1h-4zM577 345h3v2h-3zM587 345h4v1h-4zM592 345h5v1h-5zM598 345h6v1h-6zM605 345h1v1h-1zM607 345h4v1h-4zM614 345h1v1h-1zM627 345h4v2h-4zM632 345h1v2h-1zM635 345h2v1h-2zM639 345h1v1h-1zM641 345h5v1h-5zM647 345h5v1h-5zM658 345h1v1h-1zM661 345h1v1h-1zM664 345h3v1h-3zM668 345h4v1h-4zM674 345h1v1h-1zM677 345h1v1h-1zM679 345h4v1h-4zM689 345h4v1h-4zM696 345h2v1h-2zM704 345h4v1h-4zM534 346h4v1h-4zM542 346h2v1h-2zM552 346h2v1h-2zM557 346h2v1h-2zM565 346h5v1h-5zM571 346h5v1h-5zM582 346h1v1h-1zM585 346h1v1h-1zM587 346h5v2h-5zM593 346h4v1h-4zM599 346h4v1h-4zM604 346h1v1h-1zM606 346h4v1h-4zM612 346h1v1h-1zM618 346h1v1h-1zM624 346h2v1h-2zM634 346h5v1h-5zM640 346h1v1h-1zM643 346h2v1h-2zM646 346h5v1h-5zM658 346h3v1h-3zM663 346h1v1h-1zM666 346h1v1h-1zM670 346h2v1h-2zM674 346h3v1h-3zM680 346h2v1h-2zM684 346h3v1h-3zM690 346h3v1h-3zM694 346h2v1h-2zM701 346h2v1h-2zM706 346h2v1h-2zM534 347h5v1h-5zM540 347h5v2h-5zM546 347h1v1h-1zM550 347h4v1h-4zM555 347h4v1h-4zM561 347h1v1h-1zM564 347h1v1h-1zM566 347h5v1h-5zM572 347h3v1h-3zM577 347h4v1h-4zM583 347h3v1h-3zM593 347h3v1h-3zM597 347h1v1h-1zM599 347h3v1h-3zM603 347h3v1h-3zM608 347h2v1h-2zM611 347h4v1h-4zM616 347h1v1h-1zM620 347h2v1h-2zM623 347h4v2h-4zM628 347h4v1h-4zM633 347h1v1h-1zM635 347h3v1h-3zM640 347h2v1h-2zM644 347h1v1h-1zM648 347h3v1h-3zM652 347h1v1h-1zM655 347h1v1h-1zM657 347h4v1h-4zM663 347h3v1h-3zM668 347h2v1h-2zM673 347h4v2h-4zM686 347h1v1h-1zM689 347h1v1h-1zM692 347h1v1h-1zM694 347h4v1h-4zM699 347h2v1h-2zM704 347h2v1h-2zM535 348h4v1h-4zM547 348h2v1h-2zM550 348h5v1h-5zM556 348h4v2h-4zM562 348h3v1h-3zM566 348h4v1h-4zM572 348h1v1h-1zM575 348h1v1h-1zM577 348h3v1h-3zM582 348h5v1h-5zM588 348h2v1h-2zM592 348h1v1h-1zM596 348h3v1h-3zM600 348h1v1h-1zM602 348h5v1h-5zM611 348h3v2h-3zM615 348h3v2h-3zM619 348h3v1h-3zM628 348h3v1h-3zM632 348h3v1h-3zM636 348h1v2h-1zM639 348h5v1h-5zM645 348h3v1h-3zM651 348h4v2h-4zM658 348h3v1h-3zM662 348h5v1h-5zM668 348h4v1h-4zM678 348h3v1h-3zM684 348h1v1h-1zM689 348h3v1h-3zM693 348h4v1h-4zM699 348h4v1h-4zM704 348h4v1h-4zM535 349h2v1h-2zM541 349h3v1h-3zM546 349h4v2h-4zM551 349h4v1h-4zM561 349h5v1h-5zM567 349h1v1h-1zM570 349h1v1h-1zM573 349h4v1h-4zM580 349h2v1h-2zM583 349h4v1h-4zM590 349h4v1h-4zM595 349h5v1h-5zM601 349h5v1h-5zM607 349h1v1h-1zM619 349h4v2h-4zM624 349h4v1h-4zM631 349h4v1h-4zM638 349h1v1h-1zM640 349h3v1h-3zM645 349h5v1h-5zM662 349h4v1h-4zM667 349h4v1h-4zM675 349h1v1h-1zM678 349h4v1h-4zM683 349h4v2h-4zM688 349h4v2h-4zM695 349h2v1h-2zM698 349h4v2h-4zM703 349h5v1h-5zM537 350h2v1h-2zM541 350h1v1h-1zM544 350h1v1h-1zM551 350h2v1h-2zM557 350h2v1h-2zM561 350h4v1h-4zM568 350h3v1h-3zM572 350h5v1h-5zM578 350h4v1h-4zM583 350h2v1h-2zM587 350h1v1h-1zM590 350h5v1h-5zM596 350h3v1h-3zM600 350h1v1h-1zM603 350h2v1h-2zM607 350h3v1h-3zM614 350h4v1h-4zM628 350h3v1h-3zM632 350h4v1h-4zM637 350h3v1h-3zM641 350h1v2h-1zM644 350h5v1h-5zM651 350h3v1h-3zM656 350h3v1h-3zM663 350h3v1h-3zM668 350h3v1h-3zM673 350h1v1h-1zM677 350h4v1h-4zM693 350h2v1h-2zM703 350h4v1h-4zM535 351h5v1h-5zM542 351h3v1h-3zM546 351h3v1h-3zM553 351h3v1h-3zM559 351h2v1h-2zM562 351h1v1h-1zM565 351h1v1h-1zM567 351h5v1h-5zM573 351h4v1h-4zM578 351h5v1h-5zM585 351h4v1h-4zM590 351h4v1h-4zM595 351h1v1h-1zM597 351h1v1h-1zM599 351h3v1h-3zM604 351h1v1h-1zM606 351h3v2h-3zM611 351h1v1h-1zM616 351h2v1h-2zM619 351h1v1h-1zM624 351h2v1h-2zM627 351h4v1h-4zM632 351h3v1h-3zM636 351h4v1h-4zM643 351h1v1h-1zM646 351h2v1h-2zM649 351h1v1h-1zM653 351h1v1h-1zM656 351h4v1h-4zM661 351h1v1h-1zM672 351h4v2h-4zM679 351h2v1h-2zM683 351h3v1h-3zM690 351h1v1h-1zM693 351h4v1h-4zM700 351h2v1h-2zM705 351h2v1h-2zM536 352h4v2h-4zM541 352h5v2h-5zM549 352h1v1h-1zM551 352h5v1h-5zM557 352h4v1h-4zM563 352h4v2h-4zM568 352h4v2h-4zM573 352h3v1h-3zM577 352h1v1h-1zM579 352h3v1h-3zM583 352h1v1h-1zM585 352h5v1h-5zM591 352h1v1h-1zM594 352h2v1h-2zM598 352h5v1h-5zM610 352h4v2h-4zM615 352h1v1h-1zM620 352h2v1h-2zM623 352h4v2h-4zM628 352h4v2h-4zM635 352h1v1h-1zM637 352h4v1h-4zM642 352h3v1h-3zM647 352h1v1h-1zM649 352h3v1h-3zM655 352h4v1h-4zM661 352h3v1h-3zM666 352h3v3h-3zM677 352h2v1h-2zM682 352h1v1h-1zM685 352h1v1h-1zM688 352h1v1h-1zM692 352h5v1h-5zM698 352h2v1h-2zM703 352h2v1h-2zM547 353h4v2h-4zM552 353h5v1h-5zM558 353h4v1h-4zM576 353h3v1h-3zM582 353h3v1h-3zM586 353h3v1h-3zM590 353h1v1h-1zM592 353h5v1h-5zM599 353h3v1h-3zM603 353h1v1h-1zM615 353h3v1h-3zM619 353h3v1h-3zM633 353h3v1h-3zM637 353h3v1h-3zM641 353h6v1h-6zM648 353h4v1h-4zM654 353h1v1h-1zM657 353h2v1h-2zM660 353h4v2h-4zM672 353h3v1h-3zM677 353h4v1h-4zM682 353h3v1h-3zM687 353h4v2h-4zM692 353h4v1h-4zM698 353h4v1h-4zM703 353h4v1h-4zM537 354h1v1h-1zM542 354h2v1h-2zM552 354h4v1h-4zM558 354h3v1h-3zM563 354h5v1h-5zM569 354h1v1h-1zM572 354h1v1h-1zM574 354h5v1h-5zM580 354h5v1h-5zM586 354h1v1h-1zM589 354h3v1h-3zM593 354h3v1h-3zM597 354h1v1h-1zM599 354h2v1h-2zM603 354h3v1h-3zM610 354h3v1h-3zM614 354h4v2h-4zM619 354h4v2h-4zM624 354h4v1h-4zM632 354h5v1h-5zM640 354h1v1h-1zM642 354h4v1h-4zM647 354h1v1h-1zM650 354h2v1h-2zM654 354h2v1h-2zM671 354h1v1h-1zM674 354h1v1h-1zM676 354h4v1h-4zM681 354h5v1h-5zM694 354h2v1h-2zM697 354h4v1h-4zM702 354h5v1h-5zM538 355h3v1h-3zM544 355h2v1h-2zM547 355h5v1h-5zM553 355h1v1h-1zM556 355h1v1h-1zM558 355h1v1h-1zM561 355h2v1h-2zM564 355h3v1h-3zM570 355h3v1h-3zM574 355h6v1h-6zM581 355h5v1h-5zM587 355h5v1h-5zM593 355h2v1h-2zM597 355h2v1h-2zM602 355h4v2h-4zM608 355h1v1h-1zM624 355h1v1h-1zM629 355h3v1h-3zM633 355h4v1h-4zM639 355h3v1h-3zM643 355h2v1h-2zM646 355h3v1h-3zM653 355h4v1h-4zM658 355h2v1h-2zM662 355h1v1h-1zM670 355h4v2h-4zM677 355h3v1h-3zM681 355h4v1h-4zM687 355h3v1h-3zM692 355h2v1h-2zM698 355h3v1h-3zM703 355h3v1h-3zM537 356h4v1h-4zM542 356h5v1h-5zM548 356h2v1h-2zM554 356h4v3h-4zM559 356h4v1h-4zM564 356h1v1h-1zM567 356h2v1h-2zM570 356h4v2h-4zM575 356h3v1h-3zM580 356h1v1h-1zM582 356h3v1h-3zM586 356h1v1h-1zM588 356h5v1h-5zM594 356h1v1h-1zM596 356h5v1h-5zM607 356h4v1h-4zM612 356h1v1h-1zM617 356h1v1h-1zM619 356h2v1h-2zM625 356h2v1h-2zM628 356h4v1h-4zM633 356h3v1h-3zM638 356h5v1h-5zM645 356h6v1h-6zM652 356h5v1h-5zM658 356h4v1h-4zM664 356h3v1h-3zM682 356h3v1h-3zM686 356h1v1h-1zM689 356h1v1h-1zM692 356h4v1h-4zM697 356h1v1h-1zM700 356h1v1h-1zM702 356h1v1h-1zM705 356h1v1h-1zM537 357h5v1h-5zM543 357h4v2h-4zM550 357h3v1h-3zM559 357h5v1h-5zM565 357h4v1h-4zM575 357h1v1h-1zM578 357h3v1h-3zM582 357h1v1h-1zM585 357h2v1h-2zM588 357h4v1h-4zM593 357h1v1h-1zM595 357h5v1h-5zM601 357h1v1h-1zM604 357h1v1h-1zM607 357h3v2h-3zM611 357h4v2h-4zM616 357h1v1h-1zM621 357h2v1h-2zM624 357h4v2h-4zM629 357h4v2h-4zM636 357h2v1h-2zM639 357h3v1h-3zM644 357h1v1h-1zM646 357h4v1h-4zM651 357h1v1h-1zM654 357h2v1h-2zM657 357h5v1h-5zM664 357h4v1h-4zM669 357h5v1h-5zM675 357h3v1h-3zM685 357h4v1h-4zM691 357h4v1h-4zM696 357h4v2h-4zM702 357h3v1h-3zM538 358h2v1h-2zM548 358h5v1h-5zM559 358h4v1h-4zM565 358h5v1h-5zM571 358h1v1h-1zM574 358h1v1h-1zM576 358h6v1h-6zM583 358h5v1h-5zM589 358h1v1h-1zM592 358h3v1h-3zM597 358h2v1h-2zM601 358h3v1h-3zM616 358h3v1h-3zM620 358h3v1h-3zM634 358h5v1h-5zM640 358h1v1h-1zM642 358h4v1h-4zM647 358h2v1h-2zM650 358h3v1h-3zM656 358h1v1h-1zM659 358h2v1h-2zM663 358h4v1h-4zM671 358h2v1h-2zM675 358h4v1h-4zM680 358h3v3h-3zM685 358h5v1h-5zM692 358h3v1h-3zM701 358h4v2h-4zM540 359h3v1h-3zM544 359h1v1h-1zM549 359h5v1h-5zM555 359h1v1h-1zM558 359h1v1h-1zM560 359h1v1h-1zM563 359h2v1h-2zM566 359h4v1h-4zM572 359h4v1h-4zM577 359h5v1h-5zM584 359h4v1h-4zM590 359h6v1h-6zM598 359h1v1h-1zM600 359h4v1h-4zM605 359h1v1h-1zM610 359h4v1h-4zM615 359h4v2h-4zM620 359h4v2h-4zM625 359h4v1h-4zM630 359h1v1h-1zM633 359h1v1h-1zM635 359h4v1h-4zM641 359h5v1h-5zM647 359h1v1h-1zM649 359h6v1h-6zM656 359h2v1h-2zM660 359h1v1h-1zM662 359h1v1h-1zM665 359h2v1h-2zM668 359h2v1h-2zM672 359h1v1h-1zM674 359h4v1h-4zM684 359h5v1h-5zM695 359h5v1h-5zM538 360h5v1h-5zM545 360h3v2h-3zM549 360h4v1h-4zM556 360h4v2h-4zM561 360h4v1h-4zM566 360h2v1h-2zM570 360h1v1h-1zM572 360h5v1h-5zM578 360h3v1h-3zM582 360h1v1h-1zM584 360h3v1h-3zM588 360h1v1h-1zM592 360h3v1h-3zM596 360h1v1h-1zM599 360h5v1h-5zM605 360h3v1h-3zM612 360h2v1h-2zM625 360h2v1h-2zM631 360h4v2h-4zM636 360h3v1h-3zM640 360h1v1h-1zM642 360h5v1h-5zM648 360h1v1h-1zM650 360h4v1h-4zM655 360h5v1h-5zM662 360h2v1h-2zM668 360h4v1h-4zM673 360h1v1h-1zM676 360h2v1h-2zM685 360h4v1h-4zM690 360h3v1h-3zM697 360h2v1h-2zM703 360h1v1h-1zM539 361h5v1h-5zM550 361h1v1h-1zM553 361h2v1h-2zM561 361h5v1h-5zM568 361h3v1h-3zM572 361h4v1h-4zM577 361h1v1h-1zM581 361h3v1h-3zM585 361h1v1h-1zM587 361h3v1h-3zM593 361h1v1h-1zM595 361h4v1h-4zM601 361h2v1h-2zM604 361h5v1h-5zM610 361h1v1h-1zM617 361h2v1h-2zM620 361h2v1h-2zM628 361h2v1h-2zM636 361h2v1h-2zM639 361h3v1h-3zM643 361h3v1h-3zM647 361h3v1h-3zM651 361h2v1h-2zM654 361h5v1h-5zM661 361h5v1h-5zM667 361h4v1h-4zM673 361h2v1h-2zM684 361h1v1h-1zM687 361h1v1h-1zM690 361h4v1h-4zM695 361h2v1h-2zM701 361h1v1h-1zM539 362h4v1h-4zM545 362h4v1h-4zM551 362h4v1h-4zM556 362h5v1h-5zM562 362h4v1h-4zM567 362h5v1h-5zM573 362h1v1h-1zM576 362h3v1h-3zM580 362h5v1h-5zM586 362h6v1h-6zM594 362h4v1h-4zM602 362h1v1h-1zM604 362h4v2h-4zM609 362h4v2h-4zM614 362h1v1h-1zM623 362h2v1h-2zM626 362h5v2h-5zM632 362h3v1h-3zM638 362h4v1h-4zM643 362h1v1h-1zM646 362h5v1h-5zM653 362h1v1h-1zM656 362h2v1h-2zM660 362h5v1h-5zM666 362h1v1h-1zM669 362h2v1h-2zM672 362h5v1h-5zM678 362h3v1h-3zM683 362h4v3h-4zM689 362h4v1h-4zM695 362h4v1h-4zM700 362h4v1h-4zM540 363h1v1h-1zM543 363h2v1h-2zM546 363h3v1h-3zM550 363h6v1h-6zM557 363h2v1h-2zM561 363h1v1h-1zM563 363h2v1h-2zM566 363h1v1h-1zM568 363h4v1h-4zM574 363h5v1h-5zM580 363h4v1h-4zM585 363h1v1h-1zM587 363h4v1h-4zM592 363h1v1h-1zM596 363h2v1h-2zM599 363h3v1h-3zM614 363h3v1h-3zM618 363h3v2h-3zM622 363h3v1h-3zM632 363h1v1h-1zM636 363h2v1h-2zM639 363h4v1h-4zM645 363h1v1h-1zM647 363h4v1h-4zM652 363h3v1h-3zM657 363h1v1h-1zM659 363h1v1h-1zM662 363h2v1h-2zM666 363h2v1h-2zM671 363h5v1h-5zM678 363h4v1h-4zM691 363h2v1h-2zM694 363h4v1h-4zM700 363h3v2h-3zM541 364h4v1h-4zM546 364h1v1h-1zM549 364h1v1h-1zM551 364h4v1h-4zM559 364h3v1h-3zM565 364h3v1h-3zM569 364h1v1h-1zM572 364h1v1h-1zM575 364h5v1h-5zM581 364h2v1h-2zM585 364h2v1h-2zM588 364h1v1h-1zM591 364h4v1h-4zM599 364h4v1h-4zM606 364h1v1h-1zM608 364h4v1h-4zM613 364h4v1h-4zM622 364h4v2h-4zM627 364h3v1h-3zM634 364h4v1h-4zM639 364h3v1h-3zM643 364h4v1h-4zM648 364h2v1h-2zM651 364h6v1h-6zM658 364h3v1h-3zM663 364h1v1h-1zM665 364h5v1h-5zM673 364h2v1h-2zM677 364h4v1h-4zM688 364h2v1h-2zM695 364h3v1h-3zM540 365h6v1h-6zM547 365h3v1h-3zM551 365h2v1h-2zM555 365h2v1h-2zM558 365h5v2h-5zM564 365h4v1h-4zM570 365h4v1h-4zM575 365h4v1h-4zM580 365h1v1h-1zM582 365h1v1h-1zM584 365h4v1h-4zM589 365h5v1h-5zM595 365h1v1h-1zM598 365h4v1h-4zM603 365h3v1h-3zM610 365h2v1h-2zM613 365h3v1h-3zM617 365h4v2h-4zM631 365h3v1h-3zM635 365h4v1h-4zM642 365h5v1h-5zM648 365h1v1h-1zM650 365h1v1h-1zM652 365h4v1h-4zM657 365h6v1h-6zM664 365h5v1h-5zM670 365h2v1h-2zM674 365h1v1h-1zM676 365h1v1h-1zM679 365h2v1h-2zM682 365h1v1h-1zM685 365h1v1h-1zM688 365h4v1h-4zM693 365h1v1h-1zM541 366h5v1h-5zM547 366h4v2h-4zM553 366h4v1h-4zM564 366h5v1h-5zM570 366h5v1h-5zM576 366h1v1h-1zM579 366h3v1h-3zM583 366h6v1h-6zM591 366h2v1h-2zM595 366h2v1h-2zM600 366h2v1h-2zM603 366h4v1h-4zM608 366h2v1h-2zM615 366h1v1h-1zM622 366h1v1h-1zM627 366h2v1h-2zM630 366h4v1h-4zM635 366h3v1h-3zM640 366h2v1h-2zM643 366h5v1h-5zM649 366h3v1h-3zM653 366h2v1h-2zM656 366h1v1h-1zM658 366h4v1h-4zM663 366h1v1h-1zM666 366h2v1h-2zM670 366h4v1h-4zM676 366h2v1h-2zM681 366h4v2h-4zM687 366h4v1h-4zM693 366h3v1h-3zM698 366h3v1h-3zM541 367h3v1h-3zM553 367h5v2h-5zM559 367h3v1h-3zM563 367h1v1h-1zM565 367h3v1h-3zM569 367h1v1h-1zM571 367h3v1h-3zM575 367h1v1h-1zM577 367h6v1h-6zM584 367h4v1h-4zM589 367h1v1h-1zM592 367h1v1h-1zM594 367h5v1h-5zM602 367h5v1h-5zM608 367h4v1h-4zM613 367h1v1h-1zM623 367h2v1h-2zM626 367h3v1h-3zM630 367h5v1h-5zM638 367h5v1h-5zM644 367h3v1h-3zM648 367h5v1h-5zM655 367h3v1h-3zM659 367h2v1h-2zM662 367h3v1h-3zM667 367h1v1h-1zM669 367h4v1h-4zM675 367h5v1h-5zM688 367h3v1h-3zM692 367h4v2h-4zM698 367h4v1h-4zM544 368h3v1h-3zM548 368h1v1h-1zM551 368h1v1h-1zM559 368h1v1h-1zM562 368h3v1h-3zM568 368h2v1h-2zM571 368h1v1h-1zM574 368h3v1h-3zM578 368h4v1h-4zM583 368h1v1h-1zM585 368h1v1h-1zM588 368h4v1h-4zM593 368h5v1h-5zM603 368h3v1h-3zM607 368h4v2h-4zM612 368h4v2h-4zM617 368h3v2h-3zM621 368h4v3h-4zM626 368h4v2h-4zM631 368h3v1h-3zM636 368h2v1h-2zM639 368h4v1h-4zM644 368h1v1h-1zM647 368h1v1h-1zM649 368h4v1h-4zM654 368h5v1h-5zM661 368h6v1h-6zM668 368h1v1h-1zM671 368h2v1h-2zM674 368h5v1h-5zM680 368h5v1h-5zM686 368h1v1h-1zM697 368h4v1h-4zM542 369h5v1h-5zM549 369h4v2h-4zM554 369h3v1h-3zM558 369h1v1h-1zM560 369h5v1h-5zM566 369h5v1h-5zM572 369h5v1h-5zM578 369h3v1h-3zM582 369h3v1h-3zM586 369h5v1h-5zM592 369h1v1h-1zM595 369h3v1h-3zM599 369h3v3h-3zM605 369h1v1h-1zM634 369h4v1h-4zM639 369h5v1h-5zM645 369h4v1h-4zM650 369h2v1h-2zM653 369h1v1h-1zM655 369h4v1h-4zM660 369h1v1h-1zM662 369h4v1h-4zM668 369h2v1h-2zM673 369h1v1h-1zM676 369h2v1h-2zM682 369h2v1h-2zM686 369h3v1h-3zM691 369h1v1h-1zM694 369h1v1h-1zM699 369h2v1h-2zM543 370h5v2h-5zM554 370h1v1h-1zM557 370h3v1h-3zM561 370h5v1h-5zM567 370h4v1h-4zM573 370h5v1h-5zM579 370h1v1h-1zM581 370h5v1h-5zM588 370h2v1h-2zM592 370h2v1h-2zM604 370h1v1h-1zM611 370h4v1h-4zM616 370h4v2h-4zM626 370h1v1h-1zM631 370h2v1h-2zM634 370h5v1h-5zM640 370h2v1h-2zM644 370h5v1h-5zM650 370h1v1h-1zM652 370h3v1h-3zM656 370h3v1h-3zM660 370h2v1h-2zM663 370h2v1h-2zM667 370h5v1h-5zM673 370h2v1h-2zM677 370h1v1h-1zM679 370h2v1h-2zM683 370h1v1h-1zM685 370h4v2h-4zM690 370h4v2h-4zM696 370h2v1h-2zM549 371h5v1h-5zM555 371h5v1h-5zM561 371h4v1h-4zM566 371h1v1h-1zM568 371h2v1h-2zM571 371h1v1h-1zM574 371h3v1h-3zM578 371h1v1h-1zM580 371h5v1h-5zM586 371h1v1h-1zM589 371h1v1h-1zM591 371h5v1h-5zM603 371h4v2h-4zM608 371h2v1h-2zM614 371h1v1h-1zM621 371h2v1h-2zM627 371h2v1h-2zM630 371h4v2h-4zM635 371h4v1h-4zM642 371h2v1h-2zM645 371h5v1h-5zM651 371h4v1h-4zM656 371h1v1h-1zM659 371h4v1h-4zM664 371h1v1h-1zM666 371h5v1h-5zM672 371h5v1h-5zM679 371h4v1h-4zM696 371h4v1h-4zM544 372h2v1h-2zM548 372h1v1h-1zM550 372h2v1h-2zM554 372h1v1h-1zM556 372h5v1h-5zM562 372h1v1h-1zM565 372h3v1h-3zM570 372h3v1h-3zM575 372h1v1h-1zM577 372h3v1h-3zM582 372h2v1h-2zM586 372h2v1h-2zM590 372h5v1h-5zM596 372h1v1h-1zM608 372h4v1h-4zM613 372h1v1h-1zM623 372h2v1h-2zM626 372h3v1h-3zM635 372h3v1h-3zM640 372h5v1h-5zM646 372h2v1h-2zM650 372h1v1h-1zM652 372h4v1h-4zM658 372h6v1h-6zM665 372h1v1h-1zM668 372h2v1h-2zM671 372h5v1h-5zM678 372h4v1h-4zM684 372h1v1h-1zM687 372h1v1h-1zM689 372h5v1h-5zM695 372h4v1h-4zM546 373h3v1h-3zM552 373h3v1h-3zM556 373h4v1h-4zM561 373h1v1h-1zM563 373h5v1h-5zM569 373h6v1h-6zM576 373h6v1h-6zM583 373h1v1h-1zM585 373h5v1h-5zM592 373h2v1h-2zM596 373h3v1h-3zM603 373h3v1h-3zM607 373h5v1h-5zM613 373h3v1h-3zM617 373h3v2h-3zM621 373h4v1h-4zM626 373h4v1h-4zM631 373h4v1h-4zM638 373h2v1h-2zM641 373h4v2h-4zM646 373h1v1h-1zM648 373h4v1h-4zM653 373h2v1h-2zM657 373h1v1h-1zM659 373h4v1h-4zM664 373h3v1h-3zM670 373h1v1h-1zM673 373h2v1h-2zM677 373h1v1h-1zM680 373h2v1h-2zM683 373h4v2h-4zM691 373h2v1h-2zM696 373h3v1h-3zM545 374h5v1h-5zM551 374h5v1h-5zM557 374h1v1h-1zM560 374h3v1h-3zM564 374h5v1h-5zM570 374h4v1h-4zM575 374h1v1h-1zM577 374h4v1h-4zM582 374h1v1h-1zM584 374h5v1h-5zM590 374h1v1h-1zM593 374h1v1h-1zM595 374h4v2h-4zM601 374h1v1h-1zM605 374h1v1h-1zM607 374h4v1h-4zM612 374h4v2h-4zM621 374h5v1h-5zM627 374h3v1h-3zM631 374h2v1h-2zM636 374h4v1h-4zM647 374h5v1h-5zM653 374h1v1h-1zM655 374h4v1h-4zM660 374h1v1h-1zM663 374h5v1h-5zM669 374h3v1h-3zM674 374h1v1h-1zM677 374h2v1h-2zM688 374h2v1h-2zM692 374h1v1h-1zM546 375h4v1h-4zM552 375h4v1h-4zM558 375h5v1h-5zM564 375h4v1h-4zM569 375h1v1h-1zM571 375h1v1h-1zM574 375h3v1h-3zM578 375h2v1h-2zM581 375h3v1h-3zM586 375h2v1h-2zM590 375h3v1h-3zM600 375h4v1h-4zM609 375h2v1h-2zM617 375h4v2h-4zM622 375h4v1h-4zM627 375h2v1h-2zM633 375h3v1h-3zM637 375h4v2h-4zM642 375h1v1h-1zM645 375h2v1h-2zM648 375h5v1h-5zM654 375h6v1h-6zM662 375h1v1h-1zM664 375h3v1h-3zM668 375h6v1h-6zM676 375h5v1h-5zM682 375h5v1h-5zM688 375h4v1h-4zM546 376h2v1h-2zM550 376h1v1h-1zM552 376h3v1h-3zM556 376h1v1h-1zM559 376h5v1h-5zM565 376h1v1h-1zM568 376h3v1h-3zM572 376h6v1h-6zM580 376h5v1h-5zM587 376h1v1h-1zM589 376h4v1h-4zM594 376h1v1h-1zM597 376h1v1h-1zM600 376h3v2h-3zM604 376h3v1h-3zM615 376h1v1h-1zM622 376h2v1h-2zM629 376h2v1h-2zM632 376h4v1h-4zM643 376h4v1h-4zM648 376h3v1h-3zM653 376h1v1h-1zM655 376h4v1h-4zM660 376h4v1h-4zM665 376h1v2h-1zM667 376h1v1h-1zM669 376h4v1h-4zM675 376h5v1h-5zM681 376h1v1h-1zM684 376h2v1h-2zM687 376h4v1h-4zM548 377h4v1h-4zM555 377h3v1h-3zM559 377h4v1h-4zM564 377h1v1h-1zM566 377h6v1h-6zM573 377h4v1h-4zM578 377h1v1h-1zM580 377h4v1h-4zM585 377h1v1h-1zM588 377h5v1h-5zM594 377h3v1h-3zM604 377h4v1h-4zM609 377h4v2h-4zM614 377h1v1h-1zM624 377h2v1h-2zM627 377h4v1h-4zM632 377h5v1h-5zM638 377h1v1h-1zM641 377h1v1h-1zM643 377h5v1h-5zM651 377h4v1h-4zM656 377h2v1h-2zM659 377h5v1h-5zM667 377h2v1h-2zM670 377h2v1h-2zM674 377h1v1h-1zM677 377h2v1h-2zM680 377h3v1h-3zM686 377h1v1h-1zM689 377h2v1h-2zM548 378h5v1h-5zM554 378h5v1h-5zM560 378h1v1h-1zM563 378h3v1h-3zM567 378h4v1h-4zM572 378h1v1h-1zM574 378h2v1h-2zM578 378h2v1h-2zM581 378h2v1h-2zM585 378h3v1h-3zM590 378h2v1h-2zM593 378h5v1h-5zM603 378h4v1h-4zM614 378h3v1h-3zM618 378h4v4h-4zM623 378h3v1h-3zM627 378h5v1h-5zM633 378h3v1h-3zM639 378h4v2h-4zM644 378h4v1h-4zM650 378h1v1h-1zM652 378h4v2h-4zM658 378h1v1h-1zM660 378h5v1h-5zM666 378h4v1h-4zM671 378h1v1h-1zM673 378h3v1h-3zM679 378h6v1h-6zM686 378h2v1h-2zM548 379h4v1h-4zM553 379h1v1h-1zM555 379h3v1h-3zM559 379h1v1h-1zM561 379h6v1h-6zM568 379h2v1h-2zM571 379h3v1h-3zM575 379h1v1h-1zM577 379h4v1h-4zM582 379h1v1h-1zM584 379h4v1h-4zM589 379h1v1h-1zM593 379h4v1h-4zM598 379h3v1h-3zM605 379h2v1h-2zM608 379h4v1h-4zM613 379h4v2h-4zM623 379h4v2h-4zM628 379h4v1h-4zM636 379h2v1h-2zM644 379h3v1h-3zM648 379h3v1h-3zM657 379h3v1h-3zM661 379h3v1h-3zM665 379h6v1h-6zM672 379h5v1h-5zM678 379h1v1h-1zM681 379h3v1h-3zM685 379h5v1h-5zM549 380h1v1h-1zM552 380h3v1h-3zM558 380h3v1h-3zM562 380h4v1h-4zM567 380h1v1h-1zM570 380h5v1h-5zM576 380h4v1h-4zM581 380h1v1h-1zM584 380h3v1h-3zM589 380h3v1h-3zM594 380h3v1h-3zM598 380h4v1h-4zM603 380h2v1h-2zM610 380h2v1h-2zM628 380h2v1h-2zM633 380h1v1h-1zM635 380h4v2h-4zM640 380h4v1h-4zM647 380h5v1h-5zM653 380h1v1h-1zM656 380h5v1h-5zM662 380h1v1h-1zM664 380h1v1h-1zM666 380h3v1h-3zM671 380h1v1h-1zM673 380h4v1h-4zM678 380h2v1h-2zM682 380h1v1h-1zM684 380h5v1h-5zM550 381h5v1h-5zM556 381h5v1h-5zM562 381h3v1h-3zM566 381h3v1h-3zM570 381h4v1h-4zM575 381h1v1h-1zM577 381h2v1h-2zM581 381h2v1h-2zM586 381h1v1h-1zM588 381h5v1h-5zM597 381h5v1h-5zM603 381h4v1h-4zM608 381h1v1h-1zM615 381h2v1h-2zM631 381h3v1h-3zM640 381h3v1h-3zM645 381h2v1h-2zM648 381h4v1h-4zM655 381h1v1h-1zM657 381h5v1h-5zM663 381h3v1h-3zM667 381h1v1h-1zM669 381h4v1h-4zM674 381h2v1h-2zM677 381h5v1h-5zM683 381h1v1h-1zM686 381h2v1h-2zM551 382h5v1h-5zM557 382h5v1h-5zM563 382h1v1h-1zM565 382h5v1h-5zM571 382h2v1h-2zM575 382h2v1h-2zM580 382h5v1h-5zM587 382h5v1h-5zM593 382h3v1h-3zM598 382h3v1h-3zM602 382h4v2h-4zM607 382h4v2h-4zM612 382h2v1h-2zM623 382h2v1h-2zM626 382h3v2h-3zM630 382h5v2h-5zM636 382h4v1h-4zM643 382h4v1h-4zM648 382h3v1h-3zM653 382h4v1h-4zM658 382h3v1h-3zM662 382h5v1h-5zM668 382h5v1h-5zM674 382h1v1h-1zM676 382h5v1h-5zM683 382h2v1h-2zM687 382h1v1h-1zM551 383h4v1h-4zM556 383h1v1h-1zM558 383h3v1h-3zM562 383h1v1h-1zM564 383h5v1h-5zM570 383h1v1h-1zM572 383h1v1h-1zM574 383h5v1h-5zM580 383h4v1h-4zM585 383h1v1h-1zM589 383h3v1h-3zM593 383h4v1h-4zM600 383h1v1h-1zM612 383h4v1h-4zM617 383h3v2h-3zM621 383h4v3h-4zM636 383h1v1h-1zM640 383h3v1h-3zM644 383h4v2h-4zM652 383h5v1h-5zM658 383h1v1h-1zM661 383h1v1h-1zM663 383h3v1h-3zM667 383h1v1h-1zM669 383h5v1h-5zM675 383h1v1h-1zM678 383h2v1h-2zM682 383h5v1h-5zM552 384h1v1h-1zM555 384h3v1h-3zM559 384h1v1h-1zM561 384h3v1h-3zM566 384h2v1h-2zM569 384h3v1h-3zM573 384h5v1h-5zM579 384h1v1h-1zM581 384h2v1h-2zM585 384h3v1h-3zM592 384h4v1h-4zM597 384h3v1h-3zM604 384h1v1h-1zM606 384h4v1h-4zM611 384h5v1h-5zM626 384h4v2h-4zM631 384h3v1h-3zM637 384h1v1h-1zM639 384h4v1h-4zM650 384h2v1h-2zM653 384h5v1h-5zM659 384h4v1h-4zM664 384h1v1h-1zM666 384h3v1h-3zM670 384h3v1h-3zM674 384h3v1h-3zM679 384h1v1h-1zM681 384h5v1h-5zM553 385h5v1h-5zM560 385h6v1h-6zM568 385h5v1h-5zM575 385h2v1h-2zM579 385h2v1h-2zM584 385h4v2h-4zM593 385h3v1h-3zM597 385h4v1h-4zM602 385h2v1h-2zM608 385h2v1h-2zM611 385h4v1h-4zM616 385h4v2h-4zM635 385h3v1h-3zM639 385h5v1h-5zM645 385h1v1h-1zM648 385h4v1h-4zM653 385h3v1h-3zM658 385h5v1h-5zM665 385h5v1h-5zM671 385h1v1h-1zM673 385h6v1h-6zM680 385h1v1h-1zM683 385h2v1h-2zM554 386h5v1h-5zM561 386h4v1h-4zM566 386h1v1h-1zM568 386h4v1h-4zM573 386h1v1h-1zM576 386h1v1h-1zM578 386h5v1h-5zM589 386h3v1h-3zM596 386h5v1h-5zM602 386h4v1h-4zM607 386h1v1h-1zM613 386h2v1h-2zM621 386h1v1h-1zM631 386h2v1h-2zM634 386h5v2h-5zM640 386h3v1h-3zM646 386h2v1h-2zM649 386h4v1h-4zM656 386h2v1h-2zM659 386h3v1h-3zM664 386h1v1h-1zM666 386h4v1h-4zM672 386h1v1h-1zM674 386h4v1h-4zM679 386h3v1h-3zM684 386h1v1h-1zM554 387h4v1h-4zM559 387h1v1h-1zM561 387h3v1h-3zM565 387h3v1h-3zM569 387h2v1h-2zM573 387h2v1h-2zM577 387h5v1h-5zM583 387h1v1h-1zM586 387h1v1h-1zM589 387h4v1h-4zM594 387h1v1h-1zM597 387h3v1h-3zM601 387h5v1h-5zM607 387h3v1h-3zM611 387h2v1h-2zM622 387h2v1h-2zM625 387h4v2h-4zM630 387h3v1h-3zM640 387h1v1h-1zM644 387h4v1h-4zM649 387h3v1h-3zM654 387h5v1h-5zM660 387h1v1h-1zM662 387h4v1h-4zM667 387h2v1h-2zM670 387h4v1h-4zM675 387h2v1h-2zM678 387h6v1h-6zM555 388h1v1h-1zM558 388h3v1h-3zM562 388h1v1h-1zM564 388h5v1h-5zM570 388h1v1h-1zM572 388h5v1h-5zM579 388h2v1h-2zM583 388h3v1h-3zM588 388h4v1h-4zM593 388h4v1h-4zM601 388h4v1h-4zM606 388h4v2h-4zM611 388h4v3h-4zM616 388h4v4h-4zM621 388h3v1h-3zM630 388h4v2h-4zM635 388h2v1h-2zM641 388h3v1h-3zM645 388h4v1h-4zM652 388h2v1h-2zM655 388h4v1h-4zM661 388h5v1h-5zM667 388h1v1h-1zM669 388h5v1h-5zM677 388h1v1h-1zM679 388h4v1h-4zM556 389h6v1h-6zM563 389h5v1h-5zM569 389h1v1h-1zM571 389h5v1h-5zM577 389h1v1h-1zM580 389h1v1h-1zM582 389h4v1h-4zM587 389h1v1h-1zM590 389h2v1h-2zM593 389h5v1h-5zM599 389h1v1h-1zM621 389h4v2h-4zM626 389h3v2h-3zM637 389h1v1h-1zM639 389h5v1h-5zM645 389h3v1h-3zM650 389h5v2h-5zM656 389h2v1h-2zM660 389h1v1h-1zM662 389h5v1h-5zM668 389h1v1h-1zM670 389h4v1h-4zM675 389h4v1h-4zM680 389h2v1h-2zM557 390h4v1h-4zM562 390h1v1h-1zM565 390h2v1h-2zM569 390h2v1h-2zM573 390h2v1h-2zM577 390h2v1h-2zM581 390h5v1h-5zM587 390h3v1h-3zM592 390h5v1h-5zM598 390h4v2h-4zM603 390h2v1h-2zM609 390h1v1h-1zM630 390h2v1h-2zM635 390h4v2h-4zM640 390h5v1h-5zM648 390h1v1h-1zM656 390h1v1h-1zM658 390h4v1h-4zM663 390h3v1h-3zM667 390h3v1h-3zM671 390h2v1h-2zM674 390h5v1h-5zM680 390h1v1h-1zM558 391h2v1h-2zM562 391h2v1h-2zM566 391h1v1h-1zM568 391h5v1h-5zM574 391h1v1h-1zM576 391h5v1h-5zM583 391h2v1h-2zM586 391h5v1h-5zM594 391h3v1h-3zM603 391h4v1h-4zM608 391h1v1h-1zM614 391h1v1h-1zM621 391h2v1h-2zM632 391h2v1h-2zM640 391h4v1h-4zM646 391h4v2h-4zM651 391h4v1h-4zM657 391h5v1h-5zM663 391h1v1h-1zM666 391h4v1h-4zM671 391h1v1h-1zM673 391h1v1h-1zM675 391h5v1h-5zM559 392h1v1h-1zM561 392h5v1h-5zM567 392h5v1h-5zM573 392h1v1h-1zM575 392h5v1h-5zM581 392h1v1h-1zM584 392h1v1h-1zM586 392h4v2h-4zM591 392h3v1h-3zM597 392h4v1h-4zM602 392h4v2h-4zM607 392h4v2h-4zM612 392h2v1h-2zM623 392h2v1h-2zM626 392h3v2h-3zM630 392h4v1h-4zM635 392h5v1h-5zM641 392h1v1h-1zM644 392h1v1h-1zM651 392h2v1h-2zM655 392h2v1h-2zM658 392h5v1h-5zM665 392h1v1h-1zM667 392h4v1h-4zM673 392h2v1h-2zM676 392h3v1h-3zM560 393h5v1h-5zM566 393h1v1h-1zM569 393h2v1h-2zM573 393h2v1h-2zM577 393h2v1h-2zM581 393h3v1h-3zM591 393h4v1h-4zM599 393h2v1h-2zM612 393h4v1h-4zM617 393h3v2h-3zM621 393h4v3h-4zM630 393h5v1h-5zM636 393h2v1h-2zM642 393h4v1h-4zM647 393h4v1h-4zM653 393h5v1h-5zM659 393h3v1h-3zM663 393h3v1h-3zM667 393h3v1h-3zM672 393h4v1h-4zM677 393h1v1h-1zM562 394h2v1h-2zM566 394h2v1h-2zM570 394h1v1h-1zM572 394h5v1h-5zM578 394h1v1h-1zM580 394h5v1h-5zM588 394h1v1h-1zM590 394h4v1h-4zM595 394h3v1h-3zM604 394h1v1h-1zM606 394h4v1h-4zM611 394h5v1h-5zM626 394h4v2h-4zM631 394h3v1h-3zM638 394h2v1h-2zM641 394h5v1h-5zM647 394h2v1h-2zM651 394h2v1h-2zM654 394h4v1h-4zM659 394h1v1h-1zM662 394h5v1h-5zM671 394h6v1h-6zM563 395h1v1h-1zM565 395h4v1h-4zM571 395h5v1h-5zM577 395h1v1h-1zM579 395h5v1h-5zM585 395h3v1h-3zM591 395h3v1h-3zM595 395h4v1h-4zM600 395h2v1h-2zM608 395h2v1h-2zM611 395h4v1h-4zM616 395h4v2h-4zM634 395h2v1h-2zM637 395h4v2h-4zM642 395h5v1h-5zM649 395h4v1h-4zM654 395h5v1h-5zM661 395h1v1h-1zM663 395h4v1h-4zM669 395h2v1h-2zM672 395h4v1h-4zM564 396h4v1h-4zM569 396h1v1h-1zM573 396h2v1h-2zM577 396h2v1h-2zM581 396h3v1h-3zM585 396h4v1h-4zM590 396h1v1h-1zM594 396h5v1h-5zM600 396h4v1h-4zM605 396h1v1h-1zM621 396h2v1h-2zM630 396h2v1h-2zM633 396h3v1h-3zM642 396h3v1h-3zM647 396h1v1h-1zM649 396h5v1h-5zM655 396h3v1h-3zM659 396h3v1h-3zM663 396h3v1h-3zM667 396h5v1h-5zM673 396h1v1h-1zM565 397h2v1h-2zM569 397h2v1h-2zM574 397h1v1h-1zM576 397h5v1h-5zM584 397h4v1h-4zM589 397h4v1h-4zM595 397h3v1h-3zM599 397h5v1h-5zM605 397h3v1h-3zM609 397h4v4h-4zM614 397h2v1h-2zM625 397h2v1h-2zM628 397h4v3h-4zM633 397h4v2h-4zM638 397h4v1h-4zM645 397h4v2h-4zM650 397h4v2h-4zM655 397h1v1h-1zM658 397h5v1h-5zM666 397h1v1h-1zM668 397h5v1h-5zM566 398h1v1h-1zM568 398h5v1h-5zM575 398h5v1h-5zM581 398h1v1h-1zM585 398h3v1h-3zM589 398h5v1h-5zM597 398h1v1h-1zM599 398h4v1h-4zM604 398h4v2h-4zM614 398h4v3h-4zM619 398h3v2h-3zM623 398h4v2h-4zM638 398h2v1h-2zM643 398h1v1h-1zM656 398h2v1h-2zM659 398h4v1h-4zM664 398h4v1h-4zM669 398h3v1h-3zM567 399h5v1h-5zM573 399h1v1h-1zM577 399h2v1h-2zM581 399h3v1h-3zM588 399h5v1h-5zM594 399h3v2h-3zM601 399h2v1h-2zM633 399h2v1h-2zM641 399h3v1h-3zM645 399h5v1h-5zM651 399h1v1h-1zM654 399h4v1h-4zM659 399h2v1h-2zM663 399h5v1h-5zM669 399h1v1h-1zM569 400h2v1h-2zM573 400h3v1h-3zM578 400h1v1h-1zM580 400h4v1h-4zM585 400h1v1h-1zM589 400h4v1h-4zM599 400h1v1h-1zM606 400h2v1h-2zM619 400h4v2h-4zM624 400h3v1h-3zM628 400h2v1h-2zM637 400h3v1h-3zM641 400h4v2h-4zM646 400h3v1h-3zM652 400h2v1h-2zM655 400h4v1h-4zM661 400h2v1h-2zM664 400h5v1h-5zM570 401h1v1h-1zM572 401h5v1h-5zM580 401h3v1h-3zM585 401h3v1h-3zM591 401h1v1h-1zM593 401h4v1h-4zM598 401h4v2h-4zM603 401h2v1h-2zM616 401h2v1h-2zM633 401h2v1h-2zM636 401h4v1h-4zM650 401h4v1h-4zM655 401h3v1h-3zM659 401h5v1h-5zM665 401h3v1h-3zM571 402h5v1h-5zM577 402h2v1h-2zM582 402h1v1h-1zM584 402h4v2h-4zM590 402h1v1h-1zM595 402h1v1h-1zM603 402h4v1h-4zM608 402h4v2h-4zM613 402h1v1h-1zM624 402h2v1h-2zM627 402h3v2h-3zM631 402h4v1h-4zM636 402h5v1h-5zM642 402h1v1h-1zM646 402h3v1h-3zM650 402h5v1h-5zM658 402h1v1h-1zM660 402h4v1h-4zM665 402h1v1h-1zM573 403h3v1h-3zM577 403h4v1h-4zM589 403h4v2h-4zM594 403h1v1h-1zM598 403h3v1h-3zM602 403h5v1h-5zM613 403h3v1h-3zM617 403h4v4h-4zM622 403h4v3h-4zM631 403h5v1h-5zM637 403h3v1h-3zM643 403h1v1h-1zM645 403h4v1h-4zM650 403h4v1h-4zM656 403h3v1h-3zM660 403h5v1h-5zM576 404h4v1h-4zM582 404h1v1h-1zM586 404h1v1h-1zM594 404h3v1h-3zM600 404h1v1h-1zM602 404h4v1h-4zM607 404h4v2h-4zM612 404h4v2h-4zM627 404h4v2h-4zM632 404h4v1h-4zM641 404h4v1h-4zM646 404h4v2h-4zM651 404h1v1h-1zM655 404h5v1h-5zM661 404h3v1h-3zM577 405h3v1h-3zM581 405h4v3h-4zM589 405h3v1h-3zM593 405h5v1h-5zM599 405h1v1h-1zM605 405h1v1h-1zM632 405h1v1h-1zM637 405h2v1h-2zM640 405h5v1h-5zM653 405h2v1h-2zM656 405h4v2h-4zM661 405h1v1h-1zM587 406h1v1h-1zM591 406h1v1h-1zM593 406h4v1h-4zM598 406h4v2h-4zM603 406h2v1h-2zM614 406h2v1h-2zM622 406h2v1h-2zM633 406h2v1h-2zM636 406h4v2h-4zM641 406h5v1h-5zM647 406h1v1h-1zM651 406h4v1h-4zM586 407h4v1h-4zM594 407h3v1h-3zM603 407h4v1h-4zM608 407h4v2h-4zM613 407h1v1h-1zM624 407h2v1h-2zM627 407h3v2h-3zM631 407h4v1h-4zM641 407h3v1h-3zM648 407h3v1h-3zM652 407h4v2h-4zM657 407h1v1h-1zM583 408h1v1h-1zM586 408h3v2h-3zM590 408h3v1h-3zM597 408h4v1h-4zM602 408h5v1h-5zM613 408h3v1h-3zM617 408h4v4h-4zM622 408h4v3h-4zM631 408h5v1h-5zM637 408h4v1h-4zM644 408h1v1h-1zM646 408h5v1h-5zM590 409h4v1h-4zM595 409h2v1h-2zM602 409h4v1h-4zM607 409h4v2h-4zM612 409h4v2h-4zM627 409h4v2h-4zM632 409h4v1h-4zM637 409h2v1h-2zM642 409h4v2h-4zM647 409h5v1h-5zM653 409h1v1h-1zM589 410h5v1h-5zM595 410h4v1h-4zM600 410h2v1h-2zM632 410h2v1h-2zM639 410h2v1h-2zM647 410h4v1h-4zM590 411h3v1h-3zM594 411h5v1h-5zM600 411h4v1h-4zM605 411h1v1h-1zM614 411h2v1h-2zM622 411h2v1h-2zM634 411h2v1h-2zM637 411h5v2h-5zM643 411h4v1h-4zM648 411h1v1h-1zM592 412h1v1h-1zM594 412h4v1h-4zM599 412h5v1h-5zM605 412h3v1h-3zM609 412h2v1h-2zM625 412h2v1h-2zM628 412h4v4h-4zM633 412h3v1h-3zM643 412h2v1h-2zM596 413h2v1h-2zM599 413h4v1h-4zM604 413h4v2h-4zM609 413h4v3h-4zM614 413h4v2h-4zM619 413h3v2h-3zM623 413h4v3h-4zM633 413h4v2h-4zM638 413h3v1h-3zM601 414h2v1h-2zM638 414h1v1h-1zM606 415h2v1h-2zM614 415h3v1h-3zM618 415h4v2h-4zM633 415h2v1h-2zM616 416h1v1h-1zM623 416h2v1h-2z" fill="#00dc00"/>
<rect x="535" y="445" width="7" height="7" fill="#d2d2d0"/>
<rect x="536" y="446" width="5" height="5" fill="#00dc00"/>
<rect x="535" y="470" width="7" height="7" fill="#d2d2d0"/>
<rect x="536" y="471" width="5" height="5" fill="#ff0000"/>
</svg>
<svg id="icons" width="792" height="581" viewBox="0 0 792 581">
<defs>
<linearGradient id="gCd" x1="0" y1="0" x2="1" y2="1"><stop offset="0" stop-color="#9a9a9a"/><stop offset="0.3" stop-color="#c8c8c8"/><stop offset="0.5" stop-color="#ffffff"/><stop offset="0.7" stop-color="#c4c4c4"/><stop offset="1" stop-color="#a8a8a8"/></linearGradient>
<linearGradient id="gPage" x1="0" y1="0" x2="1" y2="1"><stop offset="0" stop-color="#ffffff"/><stop offset="0.6" stop-color="#f4f2f0"/><stop offset="1" stop-color="#c4beb6"/></linearGradient>
<linearGradient id="gGold" x1="0" y1="0" x2="1" y2="1"><stop offset="0" stop-color="#c89010"/><stop offset="0.4" stop-color="#f4d468"/><stop offset="1" stop-color="#d89c14"/></linearGradient>
<linearGradient id="gSilver" x1="0" y1="0" x2="1" y2="1"><stop offset="0" stop-color="#ffffff"/><stop offset="0.5" stop-color="#f0f0f0"/><stop offset="1" stop-color="#b0b0b0"/></linearGradient>
<radialGradient id="gStop" cx="0.4" cy="0.3" r="0.8"><stop offset="0" stop-color="#e04030"/><stop offset="0.5" stop-color="#c01808"/><stop offset="1" stop-color="#800000"/></radialGradient>
<linearGradient id="gPow" x1="0" y1="0" x2="1" y2="1"><stop offset="0" stop-color="#d4dcd6"/><stop offset="1" stop-color="#bccac0"/></linearGradient>
</defs>
<g transform="translate(14.6 12.4)"><circle r="8.0" fill="#fff"/><path d="M2.93 -7.44A8.0 8.0 0 1 1 -3.53 7.18C-4.27 6.13 -4.53 4.67 -3.93 3.33C-3.33 1.53 -1.87 0.60 0.00 0.07C1.87 -0.53 3.13 -1.73 3.33 -3.27C3.60 -4.67 3.53 -6.27 2.93 -7.44Z" fill="#4a4af4" stroke="#0a0a50" stroke-width="0.6"/><circle r="8.0" fill="none" stroke="#0a0a50" stroke-width="1"/><circle cx="0" cy="-3.80" r="1.3" fill="#4a4af4" stroke="#0a0a50" stroke-width="0.8"/><circle cx="0" cy="4.07" r="1.3" fill="#fff" stroke="#0a0a50" stroke-width="0.8"/></g>
<circle cx="28" cy="68" r="10.5" fill="url(#gCd)" stroke="#5a5a5a" stroke-width="1"/>
<circle cx="28" cy="68" r="2.8" fill="#f4f4f4" stroke="#8a8a8a" stroke-width="0.9"/>
<circle cx="28" cy="68" r="1.2" fill="none" stroke="#b0b0b0" stroke-width="0.6"/>
<g transform="translate(271 57)"><path d="M1.8 0.7H13.4L19.4 6.6V20.2Q19.4 21.4 18.2 21.4H1.8Q0.6 21.4 0.6 20.2V1.9Q0.6 0.7 1.8 0.7Z" fill="url(#gPage)" stroke="#000" stroke-width="1.3" stroke-linejoin="round"/><path d="M13.3 1.4V6.7H18.8Z" fill="#f6f6f6"/><path d="M13.1 1.2V6.9" fill="none" stroke="#9a9a9a" stroke-width="0.8"/><path d="M12.8 6.9H19.2" fill="none" stroke="#000" stroke-width="1.1"/></g>
<text x="272.6" y="63.8" font-size="6.3" font-family="Liberation Sans,Arial,sans-serif" font-weight="bold" fill="#000" textLength="10.2" lengthAdjust="spacingAndGlyphs">011</text>
<text x="272.4" y="70.1" font-size="6.3" font-family="Liberation Sans,Arial,sans-serif" font-weight="bold" fill="#111" textLength="17" lengthAdjust="spacingAndGlyphs">10011</text>
<text x="272.4" y="76.4" font-size="6.3" font-family="Liberation Sans,Arial,sans-serif" font-weight="bold" fill="#111" textLength="17" lengthAdjust="spacingAndGlyphs">00111</text>
<g transform="translate(481 57)"><path d="M1.8 0.7H13.4L19.4 6.6V20.2Q19.4 21.4 18.2 21.4H1.8Q0.6 21.4 0.6 20.2V1.9Q0.6 0.7 1.8 0.7Z" fill="url(#gPage)" stroke="#000" stroke-width="1.3" stroke-linejoin="round"/><path d="M13.3 1.4V6.7H18.8Z" fill="#f6f6f6"/><path d="M13.1 1.2V6.9" fill="none" stroke="#9a9a9a" stroke-width="0.8"/><path d="M12.8 6.9H19.2" fill="none" stroke="#000" stroke-width="1.1"/></g>
<g transform="translate(490.5 69.3)"><circle r="7.2" fill="#fafafa"/><path d="M2.64 -6.70A7.2 7.2 0 1 1 -3.18 6.46C-3.84 5.52 -4.08 4.20 -3.54 3.00C-3.00 1.38 -1.68 0.54 0.00 0.06C1.68 -0.48 2.82 -1.56 3.00 -2.94C3.24 -4.20 3.18 -5.64 2.64 -6.70Z" fill="#7676ee" stroke="#6a6a6a" stroke-width="0.54"/><circle r="7.2" fill="none" stroke="#6a6a6a" stroke-width="0.9"/><circle cx="0" cy="-3.42" r="1.2" fill="#7676ee" stroke="#6a6a6a" stroke-width="0.6"/><circle cx="0" cy="3.66" r="1.2" fill="#fafafa" stroke="#6a6a6a" stroke-width="0.6"/></g>
<g transform="translate(706.2 63.2) rotate(45)"><path d="M-2.5 4.4L-2.5 18.4Q-2.5 21.1 0 21.1Q2.5 21.1 2.5 18.4L2.5 4.4Z" fill="url(#gGold)" stroke="#6a4a08" stroke-width="0.9"/><path d="M-1 6.5V18.5" stroke="#fbe694" stroke-width="1.2" fill="none" opacity="0.8"/><path d="M-2.3 -5.3A5.7 5.7 0 1 0 2.3 -5.3L2.3 -1.4A2.3 2.3 0 0 1 -2.3 -1.4Z" fill="url(#gSilver)" stroke="#6e6e6e" stroke-width="0.9" stroke-linejoin="round"/></g>
<g transform="translate(735 68)"><circle r="10.5" fill="#fff"/><path d="M-9.7 0A9.7 9.7 0 0 1 0 -9.7V-5.1A5.1 5.1 0 0 0 -5.1 0Z" fill="#e2421c"/><path d="M9.7 0A9.7 9.7 0 0 1 0 9.7V5.1A5.1 5.1 0 0 0 5.1 0Z" fill="#e2421c"/><circle r="10.5" fill="none" stroke="#2c2c2c" stroke-width="1.2"/><circle r="4.7" fill="#eeeeec" stroke="#2c2c2c" stroke-width="1.2"/></g>
<rect x="758.6" y="57.6" width="21" height="21" rx="2" fill="url(#gPow)" stroke="#2a2a2a" stroke-width="1.2"/>
<path d="M759.5 78.2H779M779.4 59V78" fill="none" stroke="#2a2a2a" stroke-width="1.6" stroke-linecap="round"/>
<circle cx="768.7" cy="68" r="5.5" fill="none" stroke="#000" stroke-width="1.9"/>
<path d="M768.7 60.6V68.2" fill="none" stroke="#000" stroke-width="1.9" stroke-linecap="round"/>
<text x="744" y="103.8" font-size="8.6" font-family="Liberation Sans,Arial,sans-serif" font-weight="bold" fill="#8e8e8e" textLength="24" lengthAdjust="spacingAndGlyphs">01110</text>
<text x="744" y="112.7" font-size="8.6" font-family="Liberation Sans,Arial,sans-serif" font-weight="bold" fill="#000" textLength="24" lengthAdjust="spacingAndGlyphs">10011</text>
<text x="744" y="121.7" font-size="8.6" font-family="Liberation Sans,Arial,sans-serif" font-weight="bold" fill="#9a9a9a" textLength="24" lengthAdjust="spacingAndGlyphs">00111</text>
<g transform="translate(756 158.7)"><circle r="11.6" fill="#fff"/><path d="M4.25 -10.79A11.6 11.6 0 1 1 -5.12 10.41C-6.19 8.89 -6.57 6.77 -5.70 4.83C-4.83 2.22 -2.71 0.87 0.00 0.10C2.71 -0.77 4.54 -2.51 4.83 -4.74C5.22 -6.77 5.12 -9.09 4.25 -10.79Z" fill="#4848f8" stroke="#000" stroke-width="0.78"/><circle r="11.6" fill="none" stroke="#000" stroke-width="1.3"/><circle cx="0" cy="-5.51" r="1.8" fill="#4848f8" stroke="#000" stroke-width="1.1"/><circle cx="0" cy="5.90" r="1.8" fill="#fff" stroke="#000" stroke-width="1.1"/></g>
<path d="M745.5 200.5V219.5M744 218.5H768" fill="none" stroke="#000" stroke-width="1" shape-rendering="crispEdges"/>
<path d="M744.5 203.5h1M744.5 207.5h1M744.5 211.5h1M744.5 215.5h1M749.5 219v1M753.5 219v1M757.5 219v1M761.5 219v1M765.5 219v1" fill="none" stroke="#000" stroke-width="1" shape-rendering="crispEdges"/>
<path d="M746 212.6C748 207 755 202.9 767.8 202.4" fill="none" stroke="#2020ff" stroke-width="1.5"/>
<path d="M744 250.5H768M744 264.5H768M749.5 245V269M763.5 245V269" fill="none" stroke="#000" stroke-width="1" shape-rendering="crispEdges"/>
<path d="M750 251H755.5A2.7 2.7 0 1 1 758.1 251H763.5V264.5H750V258.4A2.7 2.7 0 1 1 750 255.6Z" fill="#4646f2" stroke="#101038" stroke-width="0.9" stroke-linejoin="round"/>
<circle cx="762.6" cy="257" r="2.3" fill="#fdfdfd"/>
<path d="M763.4 254.9A2.3 2.3 0 0 0 763.4 259.1" fill="none" stroke="#101038" stroke-width="0.5"/>
<path d="M754.5 265.2V263.4A2.3 2.3 0 0 1 759.1 263.4V265.2Z" fill="#eaeae8"/>
<text x="744" y="297" font-size="4.2" font-family="Liberation Sans,Arial,sans-serif" font-weight="bold" fill="#9a9a9a" textLength="11" lengthAdjust="spacingAndGlyphs">01110</text>
<text x="744" y="301.4" font-size="4.2" font-family="Liberation Sans,Arial,sans-serif" font-weight="bold" fill="#111" textLength="11" lengthAdjust="spacingAndGlyphs">10011</text>
<text x="744" y="305.8" font-size="4.2" font-family="Liberation Sans,Arial,sans-serif" font-weight="bold" fill="#aaa" textLength="11" lengthAdjust="spacingAndGlyphs">00111</text>
<path d="M762.8 299L749.2 313.6" fill="none" stroke="#111" stroke-width="1"/>
<g transform="translate(761.9 311.6)"><circle r="5.6" fill="#fff"/><path d="M2.05 -5.21A5.6 5.6 0 1 1 -2.47 5.03C-2.99 4.29 -3.17 3.27 -2.75 2.33C-2.33 1.07 -1.31 0.42 0.00 0.05C1.31 -0.37 2.19 -1.21 2.33 -2.29C2.52 -3.27 2.47 -4.39 2.05 -5.21Z" fill="#3c3cf0" stroke="#404040" stroke-width="0.48"/><circle r="5.6" fill="none" stroke="#404040" stroke-width="0.8"/><circle cx="0" cy="-2.66" r="0.9" fill="#3c3cf0" stroke="#404040" stroke-width="0.5"/><circle cx="0" cy="2.85" r="0.9" fill="#fff" stroke="#404040" stroke-width="0.5"/></g>
<circle cx="756.2" cy="509.7" r="10.2" fill="url(#gStop)" stroke="#000" stroke-width="1.7"/>
<path d="M751.4 504.9L761 514.5M761 504.9L751.4 514.5" fill="none" stroke="#fff" stroke-width="2.1"/>
<rect x="705.6" y="553.5" width="15" height="15" rx="3" fill="#fff" stroke="#2c2c2c" stroke-width="1.1"/>
<path d="M710.3 556.5H718M710.3 559H718M710.3 562H718M710.3 565.2H718" fill="none" stroke="#c8c8c8" stroke-width="0.9"/>
<path d="M708 556.5h1M708 561h1M708 565.4h1" fill="none" stroke="#303030" stroke-width="1.1"/>
</svg>
<span class="t" style="left:30.64px;top:5.00px;font-size:12px;letter-spacing:0.090px;color:#fff;font-weight:bold;text-shadow:1px 1px 0 #0a1a50;">dvdisaster-0.79</span>
<span class="t" style="left:12.34px;top:28.00px;font-size:13px;letter-spacing:-0.280px;">File</span>
<span class="t" style="left:45.20px;top:28.00px;font-size:13px;letter-spacing:-0.245px;">Tools</span>
<span class="t" style="left:749.14px;top:28.00px;font-size:13px;letter-spacing:0.020px;">Help</span>
<span class="t" style="left:55.83px;top:60.00px;font-size:13px;letter-spacing:-0.340px;">Optical drive 52X FW 1.02</span>
<span class="t" style="left:301.67px;top:60.00px;font-size:13px;letter-spacing:-0.150px;">/var/tmp/medium.iso</span>
<span class="t" style="left:511.97px;top:60.00px;font-size:13px;letter-spacing:-0.144px;">/var/tmp/medium.ecc</span>
<span class="t" style="left:10.70px;top:94.00px;font-size:14.4px;letter-spacing:0.143px;">Scanning medium for read errors.</span>
<span class="t" style="left:10.37px;top:111.00px;font-size:13px;letter-spacing:-0.084px;font-style:italic;">Medium "Example disc": CD-R mode 1, 353421 sectors, created 21-10-2002.</span>
<span class="t" style="left:22.70px;top:138.00px;font-size:13px;letter-spacing:0.326px;color:#0000ff;">Speed</span>
<span class="t" style="left:534.14px;top:138.00px;font-size:13px;letter-spacing:-0.032px;color:#0000ff;">Medium state</span>
<span class="t" style="left:10.61px;top:161.00px;font-size:13px;letter-spacing:0.059px;color:#0000ff;">50x</span>
<span class="t" style="left:11.28px;top:211.00px;font-size:13px;letter-spacing:-0.276px;color:#0000ff;">40x</span>
<span class="t" style="left:10.62px;top:261.00px;font-size:13px;letter-spacing:0.053px;color:#0000ff;">30x</span>
<span class="t" style="left:10.90px;top:311.00px;font-size:13px;letter-spacing:-0.088px;color:#0000ff;">20x</span>
<span class="t" style="left:10.30px;top:361.00px;font-size:13px;letter-spacing:0.210px;color:#0000ff;">10x</span>
<span class="t" style="left:18.90px;top:412.00px;font-size:13px;letter-spacing:0.031px;color:#0000ff;">0x</span>
<span class="t" style="left:14.23px;top:429.00px;font-size:13px;letter-spacing:-0.129px;color:#ff00ff;">C2 errors</span>
<span class="t" style="left:10.34px;top:453.50px;font-size:13px;letter-spacing:-0.350px;color:#ff00ff;">400</span>
<span class="t" style="left:9.40px;top:463.50px;font-size:13px;letter-spacing:0.100px;color:#ff00ff;">100</span>
<span class="t" style="left:18.00px;top:473.50px;font-size:13px;letter-spacing:0.203px;color:#ff00ff;">25</span>
<span class="t" style="left:26.00px;top:484.50px;font-size:13px;color:#ff00ff;">6</span>
<span class="t" style="left:33.82px;top:513.00px;font-size:13px;letter-spacing:0.350px;">0M</span>
<span class="t" style="left:93.20px;top:513.00px;font-size:13px;letter-spacing:0.158px;">100M</span>
<span class="t" style="left:161.80px;top:513.00px;font-size:13px;letter-spacing:-0.041px;">200M</span>
<span class="t" style="left:229.52px;top:513.00px;font-size:13px;letter-spacing:0.053px;">300M</span>
<span class="t" style="left:298.18px;top:513.00px;font-size:13px;letter-spacing:-0.166px;">400M</span>
<span class="t" style="left:365.51px;top:513.00px;font-size:13px;letter-spacing:0.057px;">500M</span>
<span class="t" style="left:433.80px;top:513.00px;font-size:13px;letter-spacing:-0.041px;">600M</span>
<span class="t" style="left:11.00px;top:530.00px;font-size:13px;letter-spacing:-0.160px;">Scanning finished: All sectors successfully read.</span>
<span class="t" style="left:545.20px;top:441.00px;font-size:13px;letter-spacing:-0.109px;">Successfully read</span>
<span class="t" style="left:545.10px;top:466.00px;font-size:13px;letter-spacing:-0.111px;">Unreadable / skipped</span>
<span class="t" style="left:740.34px;top:121.50px;font-size:13px;letter-spacing:-0.178px;">Read</span>
<span class="t" style="left:734.93px;top:170.50px;font-size:13px;letter-spacing:-0.041px;">Create</span>
<span class="t" style="left:740.00px;top:219.50px;font-size:13px;letter-spacing:0.298px;">Scan</span>
<span class="t" style="left:747.44px;top:268.50px;font-size:13px;letter-spacing:-0.204px;">Fix</span>
<span class="t" style="left:738.11px;top:317.50px;font-size:13px;letter-spacing:-0.118px;">Verify</span>
<span class="t" style="left:740.80px;top:521.50px;font-size:13px;letter-spacing:0.175px;">Stop</span>
<span class="t" style="left:723.31px;top:553.00px;font-size:13px;letter-spacing:-0.229px;">View log</span>
</div>
</body>
</html>
